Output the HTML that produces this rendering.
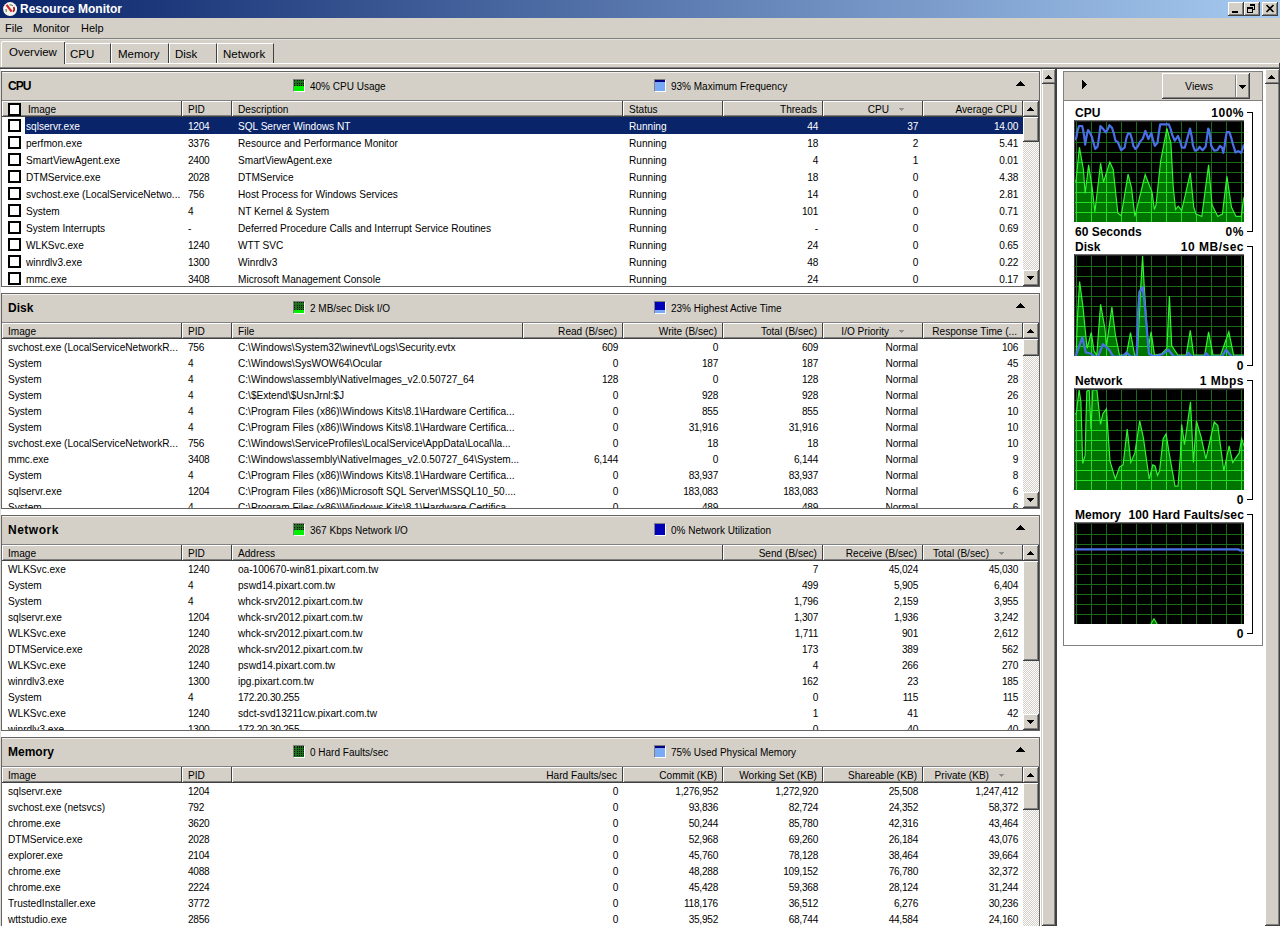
<!DOCTYPE html>
<html><head><meta charset="utf-8"><title>Resource Monitor</title>
<style>
html,body{margin:0;padding:0;}
body{width:1280px;height:926px;position:relative;overflow:hidden;background:#d4d0c8;font-family:"Liberation Sans",sans-serif;font-size:11px;color:#000;}
body div{position:absolute;box-sizing:border-box;}
.t{white-space:nowrap;font-size:10.1px;}
.n{letter-spacing:-0.25px;}
</style></head><body>
<div style="left:0px;top:0px;width:1280px;height:18px;background:linear-gradient(to right,#0a246a,#a6caf0);"></div>
<svg style="position:absolute;left:0px;top:0px" width="20" height="18" viewBox="0 0 20 18"><circle cx="10.1" cy="9.1" r="7" fill="#f6f4f0"/><path d="M6 9 L6.4 11.8" stroke="#608060" stroke-width="1.2" fill="none"/><path d="M9.5 4.6 L13 5.6" stroke="#709070" stroke-width="1.1" fill="none"/><path d="M13.6 7 Q15.2 9.5 13 11.8" stroke="#a01818" stroke-width="1.6" fill="none"/><path d="M6.6 4.8 L11.6 11.6" stroke="#d82020" stroke-width="2.2" fill="none"/></svg>
<div class="t" style="left:20px;top:2px;height:14px;line-height:14px;color:#fff;font-weight:bold;font-size:12px;">Resource Monitor</div>
<div style="left:1228px;top:2px;width:16px;height:14px;background:#d4d0c8;box-shadow:inset -1px -1px 0 #404040,inset 1px 1px 0 #fff,inset -2px -2px 0 #808080;"></div>
<div style="left:1244px;top:2px;width:16px;height:14px;background:#d4d0c8;box-shadow:inset -1px -1px 0 #404040,inset 1px 1px 0 #fff,inset -2px -2px 0 #808080;"></div>
<div style="left:1262px;top:2px;width:16px;height:14px;background:#d4d0c8;box-shadow:inset -1px -1px 0 #404040,inset 1px 1px 0 #fff,inset -2px -2px 0 #808080;"></div>
<div style="left:1232px;top:11px;width:6px;height:2px;background:#000;"></div>
<svg style="position:absolute;left:1246px;top:3px" width="10" height="10" viewBox="0 0 10 10" shape-rendering="crispEdges"><path d="M3.5 1.5 H8.5 V6.5 H7 M3.5 2.5 H8.5" stroke="#000" fill="none"/><path d="M1.5 4.5 H6.5 V9.5 H1.5 Z M1.5 5.5 H6.5" stroke="#000" fill="none"/></svg>
<svg style="position:absolute;left:1265px;top:4px" width="10" height="9" viewBox="0 0 10 9"><path d="M1.5 1 L8.5 8 M8.5 1 L1.5 8" stroke="#000" stroke-width="1.6" fill="none"/></svg>
<div style="left:0px;top:18px;width:1280px;height:20px;background:#d4d0c8;"></div>
<div style="left:0px;top:38px;width:1280px;height:1px;background:#808080;"></div>
<div style="left:0px;top:39px;width:1280px;height:1px;background:#e4e2dc;"></div>
<div class="t" style="left:5px;top:21px;height:14px;line-height:14px;font-size:11px;">File</div>
<div class="t" style="left:33px;top:21px;height:14px;line-height:14px;font-size:11px;">Monitor</div>
<div class="t" style="left:81px;top:21px;height:14px;line-height:14px;font-size:11px;">Help</div>
<div style="left:0px;top:40px;width:1280px;height:27px;background:#d4d0c8;"></div>
<div style="left:65px;top:63px;width:1215px;height:1px;background:#fff;"></div>
<div style="left:1px;top:41px;width:64px;height:27px;background:#d4d0c8;border-left:1px solid #fff;border-top:1px solid #fff;box-sizing:border-box;border-top-left-radius:2px;"></div>
<div style="left:64px;top:42px;width:1px;height:22px;background:#404040;"></div>
<div class="t" style="left:9px;top:44px;height:16px;line-height:16px;font-size:11.5px;">Overview</div>
<div style="left:65px;top:43px;width:46px;height:20px;background:#d4d0c8;border-left:1px solid #fff;border-top:1px solid #fff;border-right:1px solid #404040;box-sizing:border-box;"></div>
<div class="t" style="left:70px;top:46px;height:16px;line-height:16px;font-size:11.5px;">CPU</div>
<div style="left:111px;top:43px;width:58px;height:20px;background:#d4d0c8;border-left:1px solid #fff;border-top:1px solid #fff;border-right:1px solid #404040;box-sizing:border-box;"></div>
<div class="t" style="left:118px;top:46px;height:16px;line-height:16px;font-size:11.5px;">Memory</div>
<div style="left:169px;top:43px;width:48px;height:20px;background:#d4d0c8;border-left:1px solid #fff;border-top:1px solid #fff;border-right:1px solid #404040;box-sizing:border-box;"></div>
<div class="t" style="left:175px;top:46px;height:16px;line-height:16px;font-size:11.5px;">Disk</div>
<div style="left:217px;top:43px;width:57px;height:20px;background:#d4d0c8;border-left:1px solid #fff;border-top:1px solid #fff;border-right:1px solid #404040;box-sizing:border-box;"></div>
<div class="t" style="left:223px;top:46px;height:16px;line-height:16px;font-size:11.5px;">Network</div>
<div style="left:0px;top:67px;width:1280px;height:1px;background:#808080;"></div>
<div style="left:0px;top:68px;width:1280px;height:1px;background:#404040;"></div>
<div style="left:0px;top:69px;width:1041px;height:857px;background:#fff;"></div>
<div style="left:0px;top:69px;width:1px;height:857px;background:#e0ddd6;"></div>
<div style="left:1px;top:71px;width:1039px;height:216px;border:1px solid #646464;box-sizing:border-box;background:#d4d0c8;"></div>
<div style="left:2px;top:72px;width:1037px;height:1px;background:#f4f2ee;"></div>
<div class="t" style="left:8px;top:78px;height:16px;line-height:16px;font-weight:bold;font-size:12px;letter-spacing:-0.9px;">CPU</div>
<div style="left:293px;top:79px;width:12px;height:13px;border-top:1px solid #808080;border-left:1px solid #808080;border-bottom:1px solid #fff;border-right:1px solid #fff;overflow:hidden;">
<svg style="position:absolute;left:0;top:0" width="10" height="11" shape-rendering="crispEdges"><rect x="0" y="0" width="10" height="6" fill="#1f6f1f"/><rect x="0" y="0" width="1" height="1" fill="#001800"/><rect x="0" y="3" width="1" height="1" fill="#001800"/><rect x="0" y="5" width="1" height="1" fill="#001800"/><rect x="3" y="0" width="1" height="1" fill="#001800"/><rect x="3" y="3" width="1" height="1" fill="#001800"/><rect x="3" y="5" width="1" height="1" fill="#001800"/><rect x="5" y="0" width="1" height="1" fill="#001800"/><rect x="5" y="3" width="1" height="1" fill="#001800"/><rect x="5" y="5" width="1" height="1" fill="#001800"/><rect x="7" y="0" width="1" height="1" fill="#001800"/><rect x="7" y="3" width="1" height="1" fill="#001800"/><rect x="7" y="5" width="1" height="1" fill="#001800"/><rect x="9" y="0" width="1" height="1" fill="#001800"/><rect x="9" y="3" width="1" height="1" fill="#001800"/><rect x="9" y="5" width="1" height="1" fill="#001800"/><rect x="0" y="6" width="10" height="5" fill="#00f000"/></svg>
</div>
<div class="t" style="left:310px;top:79px;height:16px;line-height:16px;font-size:10px;">40% CPU Usage</div>
<div style="left:654px;top:79px;width:12px;height:13px;border-top:1px solid #808080;border-left:1px solid #808080;border-bottom:1px solid #fff;border-right:1px solid #fff;overflow:hidden;">
<div style="left:0;top:0;width:10px;height:2px;background:#000080;"></div>
<div style="left:0;top:2px;width:10px;height:9px;background:#78aaf8;"></div>
</div>
<div class="t" style="left:671px;top:79px;height:16px;line-height:16px;font-size:10px;">93% Maximum Frequency</div>
<svg style="position:absolute;left:1016px;top:81px" width="9" height="5" shape-rendering="crispEdges" fill="#000"><rect x="4" y="0" width="1" height="1"/><rect x="3" y="1" width="3" height="1"/><rect x="2" y="2" width="5" height="1"/><rect x="1" y="3" width="7" height="1"/><rect x="0" y="4" width="9" height="1"/></svg>
<div style="left:2px;top:100px;width:1037px;height:1px;background:#808080;"></div>
<div style="left:2px;top:101px;width:1037px;height:185px;background:#fff;overflow:hidden;"></div>
<div style="left:2px;top:101px;width:1021px;height:16px;background:#d4d0c8;"></div>
<div style="left:2px;top:101px;width:1021px;height:1px;background:#fff;"></div>
<div style="left:2px;top:115px;width:1021px;height:1px;background:#808080;"></div>
<div style="left:2px;top:116px;width:1021px;height:1px;background:#404040;"></div>
<div style="left:2px;top:101px;width:1px;height:15px;background:#fff;"></div>
<div style="left:181px;top:101px;width:1px;height:15px;background:#404040;"></div>
<div style="left:182px;top:101px;width:1px;height:15px;background:#fff;"></div>
<div class="t" style="left:28px;top:103px;height:14px;line-height:14px;">Image</div>
<div style="left:231px;top:101px;width:1px;height:15px;background:#404040;"></div>
<div style="left:232px;top:101px;width:1px;height:15px;background:#fff;"></div>
<div class="t" style="left:188px;top:103px;height:14px;line-height:14px;">PID</div>
<div style="left:622px;top:101px;width:1px;height:15px;background:#404040;"></div>
<div style="left:623px;top:101px;width:1px;height:15px;background:#fff;"></div>
<div class="t" style="left:238px;top:103px;height:14px;line-height:14px;">Description</div>
<div style="left:722px;top:101px;width:1px;height:15px;background:#404040;"></div>
<div style="left:723px;top:101px;width:1px;height:15px;background:#fff;"></div>
<div class="t" style="left:629px;top:103px;height:14px;line-height:14px;">Status</div>
<div style="left:822px;top:101px;width:1px;height:15px;background:#404040;"></div>
<div style="left:823px;top:101px;width:1px;height:15px;background:#fff;"></div>
<div class="t" style="left:723px;top:103px;width:94px;text-align:right;height:14px;line-height:14px;overflow:hidden;white-space:nowrap;">Threads</div>
<div style="left:922px;top:101px;width:1px;height:15px;background:#404040;"></div>
<div style="left:923px;top:101px;width:1px;height:15px;background:#fff;"></div>
<div class="t" style="left:823px;top:103px;width:66px;text-align:right;height:14px;line-height:14px;overflow:hidden;white-space:nowrap;">CPU</div>
<svg style="position:absolute;left:899px;top:108px" width="5" height="3" shape-rendering="crispEdges" fill="#909090"><rect x="0" y="0" width="5" height="1"/><rect x="1" y="1" width="3" height="1"/><rect x="2" y="2" width="1" height="1"/></svg>
<div style="left:1022px;top:101px;width:1px;height:15px;background:#404040;"></div>
<div style="left:1023px;top:101px;width:1px;height:15px;background:#fff;"></div>
<div class="t" style="left:923px;top:103px;width:94px;text-align:right;height:14px;line-height:14px;overflow:hidden;white-space:nowrap;">Average CPU</div>
<div style="left:8px;top:103px;width:13px;height:13px;border:2px solid #000;box-sizing:border-box;background:#fff;"></div>
<div style="left:2px;top:117px;width:1021px;height:169px;overflow:hidden;">
<div style="left:23px;top:0px;width:998px;height:17px;background:#0a246a;"></div>
<div style="left:6px;top:2px;width:13px;height:13px;border:2px solid #000;box-sizing:border-box;background:#fff;"></div>
<div class="t" style="left:24px;top:1px;height:17px;line-height:17px;color:#fff;">sqlservr.exe</div>
<div class="t n" style="left:186px;top:1px;height:17px;line-height:17px;color:#fff;">1204</div>
<div class="t" style="left:236px;top:1px;height:17px;line-height:17px;color:#fff;">SQL Server Windows NT</div>
<div class="t" style="left:627px;top:1px;height:17px;line-height:17px;color:#fff;">Running</div>
<div class="t n" style="left:721px;top:1px;width:95px;text-align:right;height:17px;line-height:17px;color:#fff;">44</div>
<div class="t n" style="left:821px;top:1px;width:95px;text-align:right;height:17px;line-height:17px;color:#fff;">37</div>
<div class="t n" style="left:921px;top:1px;width:95px;text-align:right;height:17px;line-height:17px;color:#fff;">14.00</div>
<div style="left:6px;top:19px;width:13px;height:13px;border:2px solid #000;box-sizing:border-box;background:#fff;"></div>
<div class="t" style="left:24px;top:18px;height:17px;line-height:17px;color:#000;">perfmon.exe</div>
<div class="t n" style="left:186px;top:18px;height:17px;line-height:17px;color:#000;">3376</div>
<div class="t" style="left:236px;top:18px;height:17px;line-height:17px;color:#000;">Resource and Performance Monitor</div>
<div class="t" style="left:627px;top:18px;height:17px;line-height:17px;color:#000;">Running</div>
<div class="t n" style="left:721px;top:18px;width:95px;text-align:right;height:17px;line-height:17px;color:#000;">18</div>
<div class="t n" style="left:821px;top:18px;width:95px;text-align:right;height:17px;line-height:17px;color:#000;">2</div>
<div class="t n" style="left:921px;top:18px;width:95px;text-align:right;height:17px;line-height:17px;color:#000;">5.41</div>
<div style="left:6px;top:36px;width:13px;height:13px;border:2px solid #000;box-sizing:border-box;background:#fff;"></div>
<div class="t" style="left:24px;top:35px;height:17px;line-height:17px;color:#000;">SmartViewAgent.exe</div>
<div class="t n" style="left:186px;top:35px;height:17px;line-height:17px;color:#000;">2400</div>
<div class="t" style="left:236px;top:35px;height:17px;line-height:17px;color:#000;">SmartViewAgent.exe</div>
<div class="t" style="left:627px;top:35px;height:17px;line-height:17px;color:#000;">Running</div>
<div class="t n" style="left:721px;top:35px;width:95px;text-align:right;height:17px;line-height:17px;color:#000;">4</div>
<div class="t n" style="left:821px;top:35px;width:95px;text-align:right;height:17px;line-height:17px;color:#000;">1</div>
<div class="t n" style="left:921px;top:35px;width:95px;text-align:right;height:17px;line-height:17px;color:#000;">0.01</div>
<div style="left:6px;top:53px;width:13px;height:13px;border:2px solid #000;box-sizing:border-box;background:#fff;"></div>
<div class="t" style="left:24px;top:52px;height:17px;line-height:17px;color:#000;">DTMService.exe</div>
<div class="t n" style="left:186px;top:52px;height:17px;line-height:17px;color:#000;">2028</div>
<div class="t" style="left:236px;top:52px;height:17px;line-height:17px;color:#000;">DTMService</div>
<div class="t" style="left:627px;top:52px;height:17px;line-height:17px;color:#000;">Running</div>
<div class="t n" style="left:721px;top:52px;width:95px;text-align:right;height:17px;line-height:17px;color:#000;">18</div>
<div class="t n" style="left:821px;top:52px;width:95px;text-align:right;height:17px;line-height:17px;color:#000;">0</div>
<div class="t n" style="left:921px;top:52px;width:95px;text-align:right;height:17px;line-height:17px;color:#000;">4.38</div>
<div style="left:6px;top:70px;width:13px;height:13px;border:2px solid #000;box-sizing:border-box;background:#fff;"></div>
<div class="t" style="left:24px;top:69px;height:17px;line-height:17px;color:#000;">svchost.exe (LocalServiceNetwo...</div>
<div class="t n" style="left:186px;top:69px;height:17px;line-height:17px;color:#000;">756</div>
<div class="t" style="left:236px;top:69px;height:17px;line-height:17px;color:#000;">Host Process for Windows Services</div>
<div class="t" style="left:627px;top:69px;height:17px;line-height:17px;color:#000;">Running</div>
<div class="t n" style="left:721px;top:69px;width:95px;text-align:right;height:17px;line-height:17px;color:#000;">14</div>
<div class="t n" style="left:821px;top:69px;width:95px;text-align:right;height:17px;line-height:17px;color:#000;">0</div>
<div class="t n" style="left:921px;top:69px;width:95px;text-align:right;height:17px;line-height:17px;color:#000;">2.81</div>
<div style="left:6px;top:87px;width:13px;height:13px;border:2px solid #000;box-sizing:border-box;background:#fff;"></div>
<div class="t" style="left:24px;top:86px;height:17px;line-height:17px;color:#000;">System</div>
<div class="t n" style="left:186px;top:86px;height:17px;line-height:17px;color:#000;">4</div>
<div class="t" style="left:236px;top:86px;height:17px;line-height:17px;color:#000;">NT Kernel &amp; System</div>
<div class="t" style="left:627px;top:86px;height:17px;line-height:17px;color:#000;">Running</div>
<div class="t n" style="left:721px;top:86px;width:95px;text-align:right;height:17px;line-height:17px;color:#000;">101</div>
<div class="t n" style="left:821px;top:86px;width:95px;text-align:right;height:17px;line-height:17px;color:#000;">0</div>
<div class="t n" style="left:921px;top:86px;width:95px;text-align:right;height:17px;line-height:17px;color:#000;">0.71</div>
<div style="left:6px;top:104px;width:13px;height:13px;border:2px solid #000;box-sizing:border-box;background:#fff;"></div>
<div class="t" style="left:24px;top:103px;height:17px;line-height:17px;color:#000;">System Interrupts</div>
<div class="t" style="left:186px;top:103px;height:17px;line-height:17px;color:#000;">-</div>
<div class="t" style="left:236px;top:103px;height:17px;line-height:17px;color:#000;">Deferred Procedure Calls and Interrupt Service Routines</div>
<div class="t" style="left:627px;top:103px;height:17px;line-height:17px;color:#000;">Running</div>
<div class="t" style="left:721px;top:103px;width:95px;text-align:right;height:17px;line-height:17px;color:#000;">-</div>
<div class="t n" style="left:821px;top:103px;width:95px;text-align:right;height:17px;line-height:17px;color:#000;">0</div>
<div class="t n" style="left:921px;top:103px;width:95px;text-align:right;height:17px;line-height:17px;color:#000;">0.69</div>
<div style="left:6px;top:121px;width:13px;height:13px;border:2px solid #000;box-sizing:border-box;background:#fff;"></div>
<div class="t" style="left:24px;top:120px;height:17px;line-height:17px;color:#000;">WLKSvc.exe</div>
<div class="t n" style="left:186px;top:120px;height:17px;line-height:17px;color:#000;">1240</div>
<div class="t" style="left:236px;top:120px;height:17px;line-height:17px;color:#000;">WTT SVC</div>
<div class="t" style="left:627px;top:120px;height:17px;line-height:17px;color:#000;">Running</div>
<div class="t n" style="left:721px;top:120px;width:95px;text-align:right;height:17px;line-height:17px;color:#000;">24</div>
<div class="t n" style="left:821px;top:120px;width:95px;text-align:right;height:17px;line-height:17px;color:#000;">0</div>
<div class="t n" style="left:921px;top:120px;width:95px;text-align:right;height:17px;line-height:17px;color:#000;">0.65</div>
<div style="left:6px;top:138px;width:13px;height:13px;border:2px solid #000;box-sizing:border-box;background:#fff;"></div>
<div class="t" style="left:24px;top:137px;height:17px;line-height:17px;color:#000;">winrdlv3.exe</div>
<div class="t n" style="left:186px;top:137px;height:17px;line-height:17px;color:#000;">1300</div>
<div class="t" style="left:236px;top:137px;height:17px;line-height:17px;color:#000;">Winrdlv3</div>
<div class="t" style="left:627px;top:137px;height:17px;line-height:17px;color:#000;">Running</div>
<div class="t n" style="left:721px;top:137px;width:95px;text-align:right;height:17px;line-height:17px;color:#000;">48</div>
<div class="t n" style="left:821px;top:137px;width:95px;text-align:right;height:17px;line-height:17px;color:#000;">0</div>
<div class="t n" style="left:921px;top:137px;width:95px;text-align:right;height:17px;line-height:17px;color:#000;">0.22</div>
<div style="left:6px;top:155px;width:13px;height:13px;border:2px solid #000;box-sizing:border-box;background:#fff;"></div>
<div class="t" style="left:24px;top:154px;height:17px;line-height:17px;color:#000;">mmc.exe</div>
<div class="t n" style="left:186px;top:154px;height:17px;line-height:17px;color:#000;">3408</div>
<div class="t" style="left:236px;top:154px;height:17px;line-height:17px;color:#000;">Microsoft Management Console</div>
<div class="t" style="left:627px;top:154px;height:17px;line-height:17px;color:#000;">Running</div>
<div class="t n" style="left:721px;top:154px;width:95px;text-align:right;height:17px;line-height:17px;color:#000;">24</div>
<div class="t n" style="left:821px;top:154px;width:95px;text-align:right;height:17px;line-height:17px;color:#000;">0</div>
<div class="t n" style="left:921px;top:154px;width:95px;text-align:right;height:17px;line-height:17px;color:#000;">0.17</div>
</div>
<div style="left:1023px;top:101px;width:16px;height:185px;background-color:#fff;background-image:linear-gradient(45deg,#d4d0c8 25%,transparent 25%,transparent 75%,#d4d0c8 75%),linear-gradient(45deg,#d4d0c8 25%,transparent 25%,transparent 75%,#d4d0c8 75%);background-size:2px 2px;background-position:0 0,1px 1px;"></div>
<div style="left:1023px;top:101px;width:16px;height:16px;background:#d4d0c8;box-shadow:inset -1px -1px 0 #404040,inset 1px 1px 0 #fff,inset -2px -2px 0 #808080;"></div>
<svg style="position:absolute;left:1027px;top:107px" width="7" height="4" shape-rendering="crispEdges" fill="#000"><rect x="3" y="0" width="1" height="1"/><rect x="2" y="1" width="3" height="1"/><rect x="1" y="2" width="5" height="1"/><rect x="0" y="3" width="7" height="1"/></svg>
<div style="left:1023px;top:270px;width:16px;height:16px;background:#d4d0c8;box-shadow:inset -1px -1px 0 #404040,inset 1px 1px 0 #fff,inset -2px -2px 0 #808080;"></div>
<svg style="position:absolute;left:1027px;top:276px" width="7" height="4" shape-rendering="crispEdges" fill="#000"><rect x="0" y="0" width="7" height="1"/><rect x="1" y="1" width="5" height="1"/><rect x="2" y="2" width="3" height="1"/><rect x="3" y="3" width="1" height="1"/></svg>
<div style="left:1023px;top:117px;width:16px;height:25px;background:#d4d0c8;box-shadow:inset -1px -1px 0 #404040,inset 1px 1px 0 #fff,inset -2px -2px 0 #808080;"></div>
<div style="left:1px;top:293px;width:1039px;height:216px;border:1px solid #646464;box-sizing:border-box;background:#d4d0c8;"></div>
<div style="left:2px;top:294px;width:1037px;height:1px;background:#f4f2ee;"></div>
<div class="t" style="left:8px;top:300px;height:16px;line-height:16px;font-weight:bold;font-size:12px;letter-spacing:0;">Disk</div>
<div style="left:293px;top:301px;width:12px;height:13px;border-top:1px solid #808080;border-left:1px solid #808080;border-bottom:1px solid #fff;border-right:1px solid #fff;overflow:hidden;">
<svg style="position:absolute;left:0;top:0" width="10" height="11" shape-rendering="crispEdges"><rect x="0" y="0" width="10" height="8" fill="#1f6f1f"/><rect x="0" y="0" width="1" height="1" fill="#001800"/><rect x="0" y="3" width="1" height="1" fill="#001800"/><rect x="0" y="5" width="1" height="1" fill="#001800"/><rect x="0" y="7" width="1" height="1" fill="#001800"/><rect x="3" y="0" width="1" height="1" fill="#001800"/><rect x="3" y="3" width="1" height="1" fill="#001800"/><rect x="3" y="5" width="1" height="1" fill="#001800"/><rect x="3" y="7" width="1" height="1" fill="#001800"/><rect x="5" y="0" width="1" height="1" fill="#001800"/><rect x="5" y="3" width="1" height="1" fill="#001800"/><rect x="5" y="5" width="1" height="1" fill="#001800"/><rect x="5" y="7" width="1" height="1" fill="#001800"/><rect x="7" y="0" width="1" height="1" fill="#001800"/><rect x="7" y="3" width="1" height="1" fill="#001800"/><rect x="7" y="5" width="1" height="1" fill="#001800"/><rect x="7" y="7" width="1" height="1" fill="#001800"/><rect x="9" y="0" width="1" height="1" fill="#001800"/><rect x="9" y="3" width="1" height="1" fill="#001800"/><rect x="9" y="5" width="1" height="1" fill="#001800"/><rect x="9" y="7" width="1" height="1" fill="#001800"/><rect x="0" y="8" width="10" height="3" fill="#00f000"/></svg>
</div>
<div class="t" style="left:310px;top:301px;height:16px;line-height:16px;font-size:10px;">2 MB/sec Disk I/O</div>
<div style="left:654px;top:301px;width:12px;height:13px;border-top:1px solid #808080;border-left:1px solid #808080;border-bottom:1px solid #fff;border-right:1px solid #fff;overflow:hidden;">
<div style="left:0;top:0;width:10px;height:8px;background:#0000b8;"></div>
<div style="left:0;top:8px;width:10px;height:3px;background:#78aaf8;"></div>
</div>
<div class="t" style="left:671px;top:301px;height:16px;line-height:16px;font-size:10px;">23% Highest Active Time</div>
<svg style="position:absolute;left:1016px;top:303px" width="9" height="5" shape-rendering="crispEdges" fill="#000"><rect x="4" y="0" width="1" height="1"/><rect x="3" y="1" width="3" height="1"/><rect x="2" y="2" width="5" height="1"/><rect x="1" y="3" width="7" height="1"/><rect x="0" y="4" width="9" height="1"/></svg>
<div style="left:2px;top:322px;width:1037px;height:1px;background:#808080;"></div>
<div style="left:2px;top:323px;width:1037px;height:185px;background:#fff;overflow:hidden;"></div>
<div style="left:2px;top:323px;width:1021px;height:16px;background:#d4d0c8;"></div>
<div style="left:2px;top:323px;width:1021px;height:1px;background:#fff;"></div>
<div style="left:2px;top:337px;width:1021px;height:1px;background:#808080;"></div>
<div style="left:2px;top:338px;width:1021px;height:1px;background:#404040;"></div>
<div style="left:2px;top:323px;width:1px;height:15px;background:#fff;"></div>
<div style="left:181px;top:323px;width:1px;height:15px;background:#404040;"></div>
<div style="left:182px;top:323px;width:1px;height:15px;background:#fff;"></div>
<div class="t" style="left:8px;top:325px;height:14px;line-height:14px;">Image</div>
<div style="left:231px;top:323px;width:1px;height:15px;background:#404040;"></div>
<div style="left:232px;top:323px;width:1px;height:15px;background:#fff;"></div>
<div class="t" style="left:188px;top:325px;height:14px;line-height:14px;">PID</div>
<div style="left:522px;top:323px;width:1px;height:15px;background:#404040;"></div>
<div style="left:523px;top:323px;width:1px;height:15px;background:#fff;"></div>
<div class="t" style="left:238px;top:325px;height:14px;line-height:14px;">File</div>
<div style="left:622px;top:323px;width:1px;height:15px;background:#404040;"></div>
<div style="left:623px;top:323px;width:1px;height:15px;background:#fff;"></div>
<div class="t" style="left:523px;top:325px;width:94px;text-align:right;height:14px;line-height:14px;overflow:hidden;white-space:nowrap;">Read (B/sec)</div>
<div style="left:722px;top:323px;width:1px;height:15px;background:#404040;"></div>
<div style="left:723px;top:323px;width:1px;height:15px;background:#fff;"></div>
<div class="t" style="left:623px;top:325px;width:94px;text-align:right;height:14px;line-height:14px;overflow:hidden;white-space:nowrap;">Write (B/sec)</div>
<div style="left:822px;top:323px;width:1px;height:15px;background:#404040;"></div>
<div style="left:823px;top:323px;width:1px;height:15px;background:#fff;"></div>
<div class="t" style="left:723px;top:325px;width:94px;text-align:right;height:14px;line-height:14px;overflow:hidden;white-space:nowrap;">Total (B/sec)</div>
<div style="left:922px;top:323px;width:1px;height:15px;background:#404040;"></div>
<div style="left:923px;top:323px;width:1px;height:15px;background:#fff;"></div>
<div class="t" style="left:823px;top:325px;width:66px;text-align:right;height:14px;line-height:14px;overflow:hidden;white-space:nowrap;">I/O Priority</div>
<svg style="position:absolute;left:899px;top:330px" width="5" height="3" shape-rendering="crispEdges" fill="#909090"><rect x="0" y="0" width="5" height="1"/><rect x="1" y="1" width="3" height="1"/><rect x="2" y="2" width="1" height="1"/></svg>
<div style="left:1022px;top:323px;width:1px;height:15px;background:#404040;"></div>
<div style="left:1023px;top:323px;width:1px;height:15px;background:#fff;"></div>
<div class="t" style="left:923px;top:325px;width:94px;text-align:right;height:14px;line-height:14px;overflow:hidden;white-space:nowrap;">Response Time (...</div>
<div style="left:2px;top:339px;width:1021px;height:169px;overflow:hidden;">
<div class="t" style="left:6px;top:1px;height:16px;line-height:16px;color:#000;">svchost.exe (LocalServiceNetworkR...</div>
<div class="t n" style="left:186px;top:1px;height:16px;line-height:16px;color:#000;">756</div>
<div class="t" style="left:236px;top:1px;height:16px;line-height:16px;color:#000;">C:\Windows\System32\winevt\Logs\Security.evtx</div>
<div class="t n" style="left:521px;top:1px;width:95px;text-align:right;height:16px;line-height:16px;color:#000;">609</div>
<div class="t n" style="left:621px;top:1px;width:95px;text-align:right;height:16px;line-height:16px;color:#000;">0</div>
<div class="t n" style="left:721px;top:1px;width:95px;text-align:right;height:16px;line-height:16px;color:#000;">609</div>
<div class="t" style="left:821px;top:1px;width:95px;text-align:right;height:16px;line-height:16px;color:#000;">Normal</div>
<div class="t n" style="left:921px;top:1px;width:95px;text-align:right;height:16px;line-height:16px;color:#000;">106</div>
<div class="t" style="left:6px;top:17px;height:16px;line-height:16px;color:#000;">System</div>
<div class="t n" style="left:186px;top:17px;height:16px;line-height:16px;color:#000;">4</div>
<div class="t" style="left:236px;top:17px;height:16px;line-height:16px;color:#000;">C:\Windows\SysWOW64\Ocular</div>
<div class="t n" style="left:521px;top:17px;width:95px;text-align:right;height:16px;line-height:16px;color:#000;">0</div>
<div class="t n" style="left:621px;top:17px;width:95px;text-align:right;height:16px;line-height:16px;color:#000;">187</div>
<div class="t n" style="left:721px;top:17px;width:95px;text-align:right;height:16px;line-height:16px;color:#000;">187</div>
<div class="t" style="left:821px;top:17px;width:95px;text-align:right;height:16px;line-height:16px;color:#000;">Normal</div>
<div class="t n" style="left:921px;top:17px;width:95px;text-align:right;height:16px;line-height:16px;color:#000;">45</div>
<div class="t" style="left:6px;top:33px;height:16px;line-height:16px;color:#000;">System</div>
<div class="t n" style="left:186px;top:33px;height:16px;line-height:16px;color:#000;">4</div>
<div class="t" style="left:236px;top:33px;height:16px;line-height:16px;color:#000;">C:\Windows\assembly\NativeImages_v2.0.50727_64</div>
<div class="t n" style="left:521px;top:33px;width:95px;text-align:right;height:16px;line-height:16px;color:#000;">128</div>
<div class="t n" style="left:621px;top:33px;width:95px;text-align:right;height:16px;line-height:16px;color:#000;">0</div>
<div class="t n" style="left:721px;top:33px;width:95px;text-align:right;height:16px;line-height:16px;color:#000;">128</div>
<div class="t" style="left:821px;top:33px;width:95px;text-align:right;height:16px;line-height:16px;color:#000;">Normal</div>
<div class="t n" style="left:921px;top:33px;width:95px;text-align:right;height:16px;line-height:16px;color:#000;">28</div>
<div class="t" style="left:6px;top:49px;height:16px;line-height:16px;color:#000;">System</div>
<div class="t n" style="left:186px;top:49px;height:16px;line-height:16px;color:#000;">4</div>
<div class="t" style="left:236px;top:49px;height:16px;line-height:16px;color:#000;">C:\$Extend\$UsnJrnl:$J</div>
<div class="t n" style="left:521px;top:49px;width:95px;text-align:right;height:16px;line-height:16px;color:#000;">0</div>
<div class="t n" style="left:621px;top:49px;width:95px;text-align:right;height:16px;line-height:16px;color:#000;">928</div>
<div class="t n" style="left:721px;top:49px;width:95px;text-align:right;height:16px;line-height:16px;color:#000;">928</div>
<div class="t" style="left:821px;top:49px;width:95px;text-align:right;height:16px;line-height:16px;color:#000;">Normal</div>
<div class="t n" style="left:921px;top:49px;width:95px;text-align:right;height:16px;line-height:16px;color:#000;">26</div>
<div class="t" style="left:6px;top:65px;height:16px;line-height:16px;color:#000;">System</div>
<div class="t n" style="left:186px;top:65px;height:16px;line-height:16px;color:#000;">4</div>
<div class="t" style="left:236px;top:65px;height:16px;line-height:16px;color:#000;">C:\Program Files (x86)\Windows Kits\8.1\Hardware Certifica...</div>
<div class="t n" style="left:521px;top:65px;width:95px;text-align:right;height:16px;line-height:16px;color:#000;">0</div>
<div class="t n" style="left:621px;top:65px;width:95px;text-align:right;height:16px;line-height:16px;color:#000;">855</div>
<div class="t n" style="left:721px;top:65px;width:95px;text-align:right;height:16px;line-height:16px;color:#000;">855</div>
<div class="t" style="left:821px;top:65px;width:95px;text-align:right;height:16px;line-height:16px;color:#000;">Normal</div>
<div class="t n" style="left:921px;top:65px;width:95px;text-align:right;height:16px;line-height:16px;color:#000;">10</div>
<div class="t" style="left:6px;top:81px;height:16px;line-height:16px;color:#000;">System</div>
<div class="t n" style="left:186px;top:81px;height:16px;line-height:16px;color:#000;">4</div>
<div class="t" style="left:236px;top:81px;height:16px;line-height:16px;color:#000;">C:\Program Files (x86)\Windows Kits\8.1\Hardware Certifica...</div>
<div class="t n" style="left:521px;top:81px;width:95px;text-align:right;height:16px;line-height:16px;color:#000;">0</div>
<div class="t n" style="left:621px;top:81px;width:95px;text-align:right;height:16px;line-height:16px;color:#000;">31,916</div>
<div class="t n" style="left:721px;top:81px;width:95px;text-align:right;height:16px;line-height:16px;color:#000;">31,916</div>
<div class="t" style="left:821px;top:81px;width:95px;text-align:right;height:16px;line-height:16px;color:#000;">Normal</div>
<div class="t n" style="left:921px;top:81px;width:95px;text-align:right;height:16px;line-height:16px;color:#000;">10</div>
<div class="t" style="left:6px;top:97px;height:16px;line-height:16px;color:#000;">svchost.exe (LocalServiceNetworkR...</div>
<div class="t n" style="left:186px;top:97px;height:16px;line-height:16px;color:#000;">756</div>
<div class="t" style="left:236px;top:97px;height:16px;line-height:16px;color:#000;">C:\Windows\ServiceProfiles\LocalService\AppData\Local\la...</div>
<div class="t n" style="left:521px;top:97px;width:95px;text-align:right;height:16px;line-height:16px;color:#000;">0</div>
<div class="t n" style="left:621px;top:97px;width:95px;text-align:right;height:16px;line-height:16px;color:#000;">18</div>
<div class="t n" style="left:721px;top:97px;width:95px;text-align:right;height:16px;line-height:16px;color:#000;">18</div>
<div class="t" style="left:821px;top:97px;width:95px;text-align:right;height:16px;line-height:16px;color:#000;">Normal</div>
<div class="t n" style="left:921px;top:97px;width:95px;text-align:right;height:16px;line-height:16px;color:#000;">10</div>
<div class="t" style="left:6px;top:113px;height:16px;line-height:16px;color:#000;">mmc.exe</div>
<div class="t n" style="left:186px;top:113px;height:16px;line-height:16px;color:#000;">3408</div>
<div class="t" style="left:236px;top:113px;height:16px;line-height:16px;color:#000;">C:\Windows\assembly\NativeImages_v2.0.50727_64\System...</div>
<div class="t n" style="left:521px;top:113px;width:95px;text-align:right;height:16px;line-height:16px;color:#000;">6,144</div>
<div class="t n" style="left:621px;top:113px;width:95px;text-align:right;height:16px;line-height:16px;color:#000;">0</div>
<div class="t n" style="left:721px;top:113px;width:95px;text-align:right;height:16px;line-height:16px;color:#000;">6,144</div>
<div class="t" style="left:821px;top:113px;width:95px;text-align:right;height:16px;line-height:16px;color:#000;">Normal</div>
<div class="t n" style="left:921px;top:113px;width:95px;text-align:right;height:16px;line-height:16px;color:#000;">9</div>
<div class="t" style="left:6px;top:129px;height:16px;line-height:16px;color:#000;">System</div>
<div class="t n" style="left:186px;top:129px;height:16px;line-height:16px;color:#000;">4</div>
<div class="t" style="left:236px;top:129px;height:16px;line-height:16px;color:#000;">C:\Program Files (x86)\Windows Kits\8.1\Hardware Certifica...</div>
<div class="t n" style="left:521px;top:129px;width:95px;text-align:right;height:16px;line-height:16px;color:#000;">0</div>
<div class="t n" style="left:621px;top:129px;width:95px;text-align:right;height:16px;line-height:16px;color:#000;">83,937</div>
<div class="t n" style="left:721px;top:129px;width:95px;text-align:right;height:16px;line-height:16px;color:#000;">83,937</div>
<div class="t" style="left:821px;top:129px;width:95px;text-align:right;height:16px;line-height:16px;color:#000;">Normal</div>
<div class="t n" style="left:921px;top:129px;width:95px;text-align:right;height:16px;line-height:16px;color:#000;">8</div>
<div class="t" style="left:6px;top:145px;height:16px;line-height:16px;color:#000;">sqlservr.exe</div>
<div class="t n" style="left:186px;top:145px;height:16px;line-height:16px;color:#000;">1204</div>
<div class="t" style="left:236px;top:145px;height:16px;line-height:16px;color:#000;">C:\Program Files (x86)\Microsoft SQL Server\MSSQL10_50....</div>
<div class="t n" style="left:521px;top:145px;width:95px;text-align:right;height:16px;line-height:16px;color:#000;">0</div>
<div class="t n" style="left:621px;top:145px;width:95px;text-align:right;height:16px;line-height:16px;color:#000;">183,083</div>
<div class="t n" style="left:721px;top:145px;width:95px;text-align:right;height:16px;line-height:16px;color:#000;">183,083</div>
<div class="t" style="left:821px;top:145px;width:95px;text-align:right;height:16px;line-height:16px;color:#000;">Normal</div>
<div class="t n" style="left:921px;top:145px;width:95px;text-align:right;height:16px;line-height:16px;color:#000;">6</div>
<div class="t" style="left:6px;top:161px;height:16px;line-height:16px;color:#000;">System</div>
<div class="t n" style="left:186px;top:161px;height:16px;line-height:16px;color:#000;">4</div>
<div class="t" style="left:236px;top:161px;height:16px;line-height:16px;color:#000;">C:\Program Files (x86)\Windows Kits\8.1\Hardware Certifica...</div>
<div class="t n" style="left:521px;top:161px;width:95px;text-align:right;height:16px;line-height:16px;color:#000;">0</div>
<div class="t n" style="left:621px;top:161px;width:95px;text-align:right;height:16px;line-height:16px;color:#000;">489</div>
<div class="t n" style="left:721px;top:161px;width:95px;text-align:right;height:16px;line-height:16px;color:#000;">489</div>
<div class="t" style="left:821px;top:161px;width:95px;text-align:right;height:16px;line-height:16px;color:#000;">Normal</div>
<div class="t n" style="left:921px;top:161px;width:95px;text-align:right;height:16px;line-height:16px;color:#000;">6</div>
</div>
<div style="left:1023px;top:323px;width:16px;height:185px;background-color:#fff;background-image:linear-gradient(45deg,#d4d0c8 25%,transparent 25%,transparent 75%,#d4d0c8 75%),linear-gradient(45deg,#d4d0c8 25%,transparent 25%,transparent 75%,#d4d0c8 75%);background-size:2px 2px;background-position:0 0,1px 1px;"></div>
<div style="left:1023px;top:323px;width:16px;height:16px;background:#d4d0c8;box-shadow:inset -1px -1px 0 #404040,inset 1px 1px 0 #fff,inset -2px -2px 0 #808080;"></div>
<svg style="position:absolute;left:1027px;top:329px" width="7" height="4" shape-rendering="crispEdges" fill="#000"><rect x="3" y="0" width="1" height="1"/><rect x="2" y="1" width="3" height="1"/><rect x="1" y="2" width="5" height="1"/><rect x="0" y="3" width="7" height="1"/></svg>
<div style="left:1023px;top:492px;width:16px;height:16px;background:#d4d0c8;box-shadow:inset -1px -1px 0 #404040,inset 1px 1px 0 #fff,inset -2px -2px 0 #808080;"></div>
<svg style="position:absolute;left:1027px;top:498px" width="7" height="4" shape-rendering="crispEdges" fill="#000"><rect x="0" y="0" width="7" height="1"/><rect x="1" y="1" width="5" height="1"/><rect x="2" y="2" width="3" height="1"/><rect x="3" y="3" width="1" height="1"/></svg>
<div style="left:1023px;top:339px;width:16px;height:17px;background:#d4d0c8;box-shadow:inset -1px -1px 0 #404040,inset 1px 1px 0 #fff,inset -2px -2px 0 #808080;"></div>
<div style="left:1px;top:515px;width:1039px;height:216px;border:1px solid #646464;box-sizing:border-box;background:#d4d0c8;"></div>
<div style="left:2px;top:516px;width:1037px;height:1px;background:#f4f2ee;"></div>
<div class="t" style="left:8px;top:522px;height:16px;line-height:16px;font-weight:bold;font-size:12px;letter-spacing:0.5px;">Network</div>
<div style="left:293px;top:523px;width:12px;height:13px;border-top:1px solid #808080;border-left:1px solid #808080;border-bottom:1px solid #fff;border-right:1px solid #fff;overflow:hidden;">
<svg style="position:absolute;left:0;top:0" width="10" height="11" shape-rendering="crispEdges"><rect x="0" y="0" width="10" height="6" fill="#1f6f1f"/><rect x="0" y="0" width="1" height="1" fill="#001800"/><rect x="0" y="3" width="1" height="1" fill="#001800"/><rect x="0" y="5" width="1" height="1" fill="#001800"/><rect x="3" y="0" width="1" height="1" fill="#001800"/><rect x="3" y="3" width="1" height="1" fill="#001800"/><rect x="3" y="5" width="1" height="1" fill="#001800"/><rect x="5" y="0" width="1" height="1" fill="#001800"/><rect x="5" y="3" width="1" height="1" fill="#001800"/><rect x="5" y="5" width="1" height="1" fill="#001800"/><rect x="7" y="0" width="1" height="1" fill="#001800"/><rect x="7" y="3" width="1" height="1" fill="#001800"/><rect x="7" y="5" width="1" height="1" fill="#001800"/><rect x="9" y="0" width="1" height="1" fill="#001800"/><rect x="9" y="3" width="1" height="1" fill="#001800"/><rect x="9" y="5" width="1" height="1" fill="#001800"/><rect x="0" y="6" width="10" height="5" fill="#00f000"/></svg>
</div>
<div class="t" style="left:310px;top:523px;height:16px;line-height:16px;font-size:10px;">367 Kbps Network I/O</div>
<div style="left:654px;top:523px;width:12px;height:13px;border-top:1px solid #808080;border-left:1px solid #808080;border-bottom:1px solid #fff;border-right:1px solid #fff;overflow:hidden;">
<div style="left:0;top:0;width:10px;height:11px;background:#0000b8;"></div>
</div>
<div class="t" style="left:671px;top:523px;height:16px;line-height:16px;font-size:10px;">0% Network Utilization</div>
<svg style="position:absolute;left:1016px;top:525px" width="9" height="5" shape-rendering="crispEdges" fill="#000"><rect x="4" y="0" width="1" height="1"/><rect x="3" y="1" width="3" height="1"/><rect x="2" y="2" width="5" height="1"/><rect x="1" y="3" width="7" height="1"/><rect x="0" y="4" width="9" height="1"/></svg>
<div style="left:2px;top:544px;width:1037px;height:1px;background:#808080;"></div>
<div style="left:2px;top:545px;width:1037px;height:185px;background:#fff;overflow:hidden;"></div>
<div style="left:2px;top:545px;width:1021px;height:16px;background:#d4d0c8;"></div>
<div style="left:2px;top:545px;width:1021px;height:1px;background:#fff;"></div>
<div style="left:2px;top:559px;width:1021px;height:1px;background:#808080;"></div>
<div style="left:2px;top:560px;width:1021px;height:1px;background:#404040;"></div>
<div style="left:2px;top:545px;width:1px;height:15px;background:#fff;"></div>
<div style="left:181px;top:545px;width:1px;height:15px;background:#404040;"></div>
<div style="left:182px;top:545px;width:1px;height:15px;background:#fff;"></div>
<div class="t" style="left:8px;top:547px;height:14px;line-height:14px;">Image</div>
<div style="left:231px;top:545px;width:1px;height:15px;background:#404040;"></div>
<div style="left:232px;top:545px;width:1px;height:15px;background:#fff;"></div>
<div class="t" style="left:188px;top:547px;height:14px;line-height:14px;">PID</div>
<div style="left:722px;top:545px;width:1px;height:15px;background:#404040;"></div>
<div style="left:723px;top:545px;width:1px;height:15px;background:#fff;"></div>
<div class="t" style="left:238px;top:547px;height:14px;line-height:14px;">Address</div>
<div style="left:822px;top:545px;width:1px;height:15px;background:#404040;"></div>
<div style="left:823px;top:545px;width:1px;height:15px;background:#fff;"></div>
<div class="t" style="left:723px;top:547px;width:94px;text-align:right;height:14px;line-height:14px;overflow:hidden;white-space:nowrap;">Send (B/sec)</div>
<div style="left:922px;top:545px;width:1px;height:15px;background:#404040;"></div>
<div style="left:923px;top:545px;width:1px;height:15px;background:#fff;"></div>
<div class="t" style="left:823px;top:547px;width:94px;text-align:right;height:14px;line-height:14px;overflow:hidden;white-space:nowrap;">Receive (B/sec)</div>
<div style="left:1022px;top:545px;width:1px;height:15px;background:#404040;"></div>
<div style="left:1023px;top:545px;width:1px;height:15px;background:#fff;"></div>
<div class="t" style="left:923px;top:547px;width:66px;text-align:right;height:14px;line-height:14px;overflow:hidden;white-space:nowrap;">Total (B/sec)</div>
<svg style="position:absolute;left:999px;top:552px" width="5" height="3" shape-rendering="crispEdges" fill="#909090"><rect x="0" y="0" width="5" height="1"/><rect x="1" y="1" width="3" height="1"/><rect x="2" y="2" width="1" height="1"/></svg>
<div style="left:2px;top:561px;width:1021px;height:169px;overflow:hidden;">
<div class="t" style="left:6px;top:1px;height:16px;line-height:16px;color:#000;">WLKSvc.exe</div>
<div class="t n" style="left:186px;top:1px;height:16px;line-height:16px;color:#000;">1240</div>
<div class="t" style="left:236px;top:1px;height:16px;line-height:16px;color:#000;">oa-100670-win81.pixart.com.tw</div>
<div class="t n" style="left:721px;top:1px;width:95px;text-align:right;height:16px;line-height:16px;color:#000;">7</div>
<div class="t n" style="left:821px;top:1px;width:95px;text-align:right;height:16px;line-height:16px;color:#000;">45,024</div>
<div class="t n" style="left:921px;top:1px;width:95px;text-align:right;height:16px;line-height:16px;color:#000;">45,030</div>
<div class="t" style="left:6px;top:17px;height:16px;line-height:16px;color:#000;">System</div>
<div class="t n" style="left:186px;top:17px;height:16px;line-height:16px;color:#000;">4</div>
<div class="t" style="left:236px;top:17px;height:16px;line-height:16px;color:#000;">pswd14.pixart.com.tw</div>
<div class="t n" style="left:721px;top:17px;width:95px;text-align:right;height:16px;line-height:16px;color:#000;">499</div>
<div class="t n" style="left:821px;top:17px;width:95px;text-align:right;height:16px;line-height:16px;color:#000;">5,905</div>
<div class="t n" style="left:921px;top:17px;width:95px;text-align:right;height:16px;line-height:16px;color:#000;">6,404</div>
<div class="t" style="left:6px;top:33px;height:16px;line-height:16px;color:#000;">System</div>
<div class="t n" style="left:186px;top:33px;height:16px;line-height:16px;color:#000;">4</div>
<div class="t" style="left:236px;top:33px;height:16px;line-height:16px;color:#000;">whck-srv2012.pixart.com.tw</div>
<div class="t n" style="left:721px;top:33px;width:95px;text-align:right;height:16px;line-height:16px;color:#000;">1,796</div>
<div class="t n" style="left:821px;top:33px;width:95px;text-align:right;height:16px;line-height:16px;color:#000;">2,159</div>
<div class="t n" style="left:921px;top:33px;width:95px;text-align:right;height:16px;line-height:16px;color:#000;">3,955</div>
<div class="t" style="left:6px;top:49px;height:16px;line-height:16px;color:#000;">sqlservr.exe</div>
<div class="t n" style="left:186px;top:49px;height:16px;line-height:16px;color:#000;">1204</div>
<div class="t" style="left:236px;top:49px;height:16px;line-height:16px;color:#000;">whck-srv2012.pixart.com.tw</div>
<div class="t n" style="left:721px;top:49px;width:95px;text-align:right;height:16px;line-height:16px;color:#000;">1,307</div>
<div class="t n" style="left:821px;top:49px;width:95px;text-align:right;height:16px;line-height:16px;color:#000;">1,936</div>
<div class="t n" style="left:921px;top:49px;width:95px;text-align:right;height:16px;line-height:16px;color:#000;">3,242</div>
<div class="t" style="left:6px;top:65px;height:16px;line-height:16px;color:#000;">WLKSvc.exe</div>
<div class="t n" style="left:186px;top:65px;height:16px;line-height:16px;color:#000;">1240</div>
<div class="t" style="left:236px;top:65px;height:16px;line-height:16px;color:#000;">whck-srv2012.pixart.com.tw</div>
<div class="t n" style="left:721px;top:65px;width:95px;text-align:right;height:16px;line-height:16px;color:#000;">1,711</div>
<div class="t n" style="left:821px;top:65px;width:95px;text-align:right;height:16px;line-height:16px;color:#000;">901</div>
<div class="t n" style="left:921px;top:65px;width:95px;text-align:right;height:16px;line-height:16px;color:#000;">2,612</div>
<div class="t" style="left:6px;top:81px;height:16px;line-height:16px;color:#000;">DTMService.exe</div>
<div class="t n" style="left:186px;top:81px;height:16px;line-height:16px;color:#000;">2028</div>
<div class="t" style="left:236px;top:81px;height:16px;line-height:16px;color:#000;">whck-srv2012.pixart.com.tw</div>
<div class="t n" style="left:721px;top:81px;width:95px;text-align:right;height:16px;line-height:16px;color:#000;">173</div>
<div class="t n" style="left:821px;top:81px;width:95px;text-align:right;height:16px;line-height:16px;color:#000;">389</div>
<div class="t n" style="left:921px;top:81px;width:95px;text-align:right;height:16px;line-height:16px;color:#000;">562</div>
<div class="t" style="left:6px;top:97px;height:16px;line-height:16px;color:#000;">WLKSvc.exe</div>
<div class="t n" style="left:186px;top:97px;height:16px;line-height:16px;color:#000;">1240</div>
<div class="t" style="left:236px;top:97px;height:16px;line-height:16px;color:#000;">pswd14.pixart.com.tw</div>
<div class="t n" style="left:721px;top:97px;width:95px;text-align:right;height:16px;line-height:16px;color:#000;">4</div>
<div class="t n" style="left:821px;top:97px;width:95px;text-align:right;height:16px;line-height:16px;color:#000;">266</div>
<div class="t n" style="left:921px;top:97px;width:95px;text-align:right;height:16px;line-height:16px;color:#000;">270</div>
<div class="t" style="left:6px;top:113px;height:16px;line-height:16px;color:#000;">winrdlv3.exe</div>
<div class="t n" style="left:186px;top:113px;height:16px;line-height:16px;color:#000;">1300</div>
<div class="t" style="left:236px;top:113px;height:16px;line-height:16px;color:#000;">ipg.pixart.com.tw</div>
<div class="t n" style="left:721px;top:113px;width:95px;text-align:right;height:16px;line-height:16px;color:#000;">162</div>
<div class="t n" style="left:821px;top:113px;width:95px;text-align:right;height:16px;line-height:16px;color:#000;">23</div>
<div class="t n" style="left:921px;top:113px;width:95px;text-align:right;height:16px;line-height:16px;color:#000;">185</div>
<div class="t" style="left:6px;top:129px;height:16px;line-height:16px;color:#000;">System</div>
<div class="t n" style="left:186px;top:129px;height:16px;line-height:16px;color:#000;">4</div>
<div class="t n" style="left:236px;top:129px;height:16px;line-height:16px;color:#000;">172.20.30.255</div>
<div class="t n" style="left:721px;top:129px;width:95px;text-align:right;height:16px;line-height:16px;color:#000;">0</div>
<div class="t n" style="left:821px;top:129px;width:95px;text-align:right;height:16px;line-height:16px;color:#000;">115</div>
<div class="t n" style="left:921px;top:129px;width:95px;text-align:right;height:16px;line-height:16px;color:#000;">115</div>
<div class="t" style="left:6px;top:145px;height:16px;line-height:16px;color:#000;">WLKSvc.exe</div>
<div class="t n" style="left:186px;top:145px;height:16px;line-height:16px;color:#000;">1240</div>
<div class="t" style="left:236px;top:145px;height:16px;line-height:16px;color:#000;">sdct-svd13211cw.pixart.com.tw</div>
<div class="t n" style="left:721px;top:145px;width:95px;text-align:right;height:16px;line-height:16px;color:#000;">1</div>
<div class="t n" style="left:821px;top:145px;width:95px;text-align:right;height:16px;line-height:16px;color:#000;">41</div>
<div class="t n" style="left:921px;top:145px;width:95px;text-align:right;height:16px;line-height:16px;color:#000;">42</div>
<div class="t" style="left:6px;top:161px;height:16px;line-height:16px;color:#000;">winrdlv3.exe</div>
<div class="t n" style="left:186px;top:161px;height:16px;line-height:16px;color:#000;">1300</div>
<div class="t n" style="left:236px;top:161px;height:16px;line-height:16px;color:#000;">172.20.30.255</div>
<div class="t n" style="left:721px;top:161px;width:95px;text-align:right;height:16px;line-height:16px;color:#000;">0</div>
<div class="t n" style="left:821px;top:161px;width:95px;text-align:right;height:16px;line-height:16px;color:#000;">40</div>
<div class="t n" style="left:921px;top:161px;width:95px;text-align:right;height:16px;line-height:16px;color:#000;">40</div>
</div>
<div style="left:1023px;top:545px;width:16px;height:185px;background-color:#fff;background-image:linear-gradient(45deg,#d4d0c8 25%,transparent 25%,transparent 75%,#d4d0c8 75%),linear-gradient(45deg,#d4d0c8 25%,transparent 25%,transparent 75%,#d4d0c8 75%);background-size:2px 2px;background-position:0 0,1px 1px;"></div>
<div style="left:1023px;top:545px;width:16px;height:16px;background:#d4d0c8;box-shadow:inset -1px -1px 0 #404040,inset 1px 1px 0 #fff,inset -2px -2px 0 #808080;"></div>
<svg style="position:absolute;left:1027px;top:551px" width="7" height="4" shape-rendering="crispEdges" fill="#000"><rect x="3" y="0" width="1" height="1"/><rect x="2" y="1" width="3" height="1"/><rect x="1" y="2" width="5" height="1"/><rect x="0" y="3" width="7" height="1"/></svg>
<div style="left:1023px;top:714px;width:16px;height:16px;background:#d4d0c8;box-shadow:inset -1px -1px 0 #404040,inset 1px 1px 0 #fff,inset -2px -2px 0 #808080;"></div>
<svg style="position:absolute;left:1027px;top:720px" width="7" height="4" shape-rendering="crispEdges" fill="#000"><rect x="0" y="0" width="7" height="1"/><rect x="1" y="1" width="5" height="1"/><rect x="2" y="2" width="3" height="1"/><rect x="3" y="3" width="1" height="1"/></svg>
<div style="left:1023px;top:561px;width:16px;height:100px;background:#d4d0c8;box-shadow:inset -1px -1px 0 #404040,inset 1px 1px 0 #fff,inset -2px -2px 0 #808080;"></div>
<div style="left:1px;top:737px;width:1039px;height:216px;border:1px solid #646464;box-sizing:border-box;background:#d4d0c8;"></div>
<div style="left:2px;top:738px;width:1037px;height:1px;background:#f4f2ee;"></div>
<div class="t" style="left:8px;top:744px;height:16px;line-height:16px;font-weight:bold;font-size:12px;letter-spacing:0;">Memory</div>
<div style="left:293px;top:745px;width:12px;height:13px;border-top:1px solid #808080;border-left:1px solid #808080;border-bottom:1px solid #fff;border-right:1px solid #fff;overflow:hidden;">
<svg style="position:absolute;left:0;top:0" width="10" height="11" shape-rendering="crispEdges"><rect x="0" y="0" width="10" height="11" fill="#1f6f1f"/><rect x="0" y="0" width="1" height="1" fill="#001800"/><rect x="0" y="3" width="1" height="1" fill="#001800"/><rect x="0" y="5" width="1" height="1" fill="#001800"/><rect x="0" y="7" width="1" height="1" fill="#001800"/><rect x="0" y="9" width="1" height="1" fill="#001800"/><rect x="0" y="01" width="1" height="1" fill="#001800"/><rect x="3" y="0" width="1" height="1" fill="#001800"/><rect x="3" y="3" width="1" height="1" fill="#001800"/><rect x="3" y="5" width="1" height="1" fill="#001800"/><rect x="3" y="7" width="1" height="1" fill="#001800"/><rect x="3" y="9" width="1" height="1" fill="#001800"/><rect x="3" y="01" width="1" height="1" fill="#001800"/><rect x="5" y="0" width="1" height="1" fill="#001800"/><rect x="5" y="3" width="1" height="1" fill="#001800"/><rect x="5" y="5" width="1" height="1" fill="#001800"/><rect x="5" y="7" width="1" height="1" fill="#001800"/><rect x="5" y="9" width="1" height="1" fill="#001800"/><rect x="5" y="01" width="1" height="1" fill="#001800"/><rect x="7" y="0" width="1" height="1" fill="#001800"/><rect x="7" y="3" width="1" height="1" fill="#001800"/><rect x="7" y="5" width="1" height="1" fill="#001800"/><rect x="7" y="7" width="1" height="1" fill="#001800"/><rect x="7" y="9" width="1" height="1" fill="#001800"/><rect x="7" y="01" width="1" height="1" fill="#001800"/><rect x="9" y="0" width="1" height="1" fill="#001800"/><rect x="9" y="3" width="1" height="1" fill="#001800"/><rect x="9" y="5" width="1" height="1" fill="#001800"/><rect x="9" y="7" width="1" height="1" fill="#001800"/><rect x="9" y="9" width="1" height="1" fill="#001800"/><rect x="9" y="01" width="1" height="1" fill="#001800"/><rect x="0" y="11" width="10" height="0" fill="#00f000"/></svg>
</div>
<div class="t" style="left:310px;top:745px;height:16px;line-height:16px;font-size:10px;">0 Hard Faults/sec</div>
<div style="left:654px;top:745px;width:12px;height:13px;border-top:1px solid #808080;border-left:1px solid #808080;border-bottom:1px solid #fff;border-right:1px solid #fff;overflow:hidden;">
<div style="left:0;top:0;width:10px;height:2px;background:#000080;"></div>
<div style="left:0;top:2px;width:10px;height:9px;background:#78aaf8;"></div>
</div>
<div class="t" style="left:671px;top:745px;height:16px;line-height:16px;font-size:10px;">75% Used Physical Memory</div>
<svg style="position:absolute;left:1016px;top:747px" width="9" height="5" shape-rendering="crispEdges" fill="#000"><rect x="4" y="0" width="1" height="1"/><rect x="3" y="1" width="3" height="1"/><rect x="2" y="2" width="5" height="1"/><rect x="1" y="3" width="7" height="1"/><rect x="0" y="4" width="9" height="1"/></svg>
<div style="left:2px;top:766px;width:1037px;height:1px;background:#808080;"></div>
<div style="left:2px;top:767px;width:1037px;height:185px;background:#fff;overflow:hidden;"></div>
<div style="left:2px;top:767px;width:1021px;height:16px;background:#d4d0c8;"></div>
<div style="left:2px;top:767px;width:1021px;height:1px;background:#fff;"></div>
<div style="left:2px;top:781px;width:1021px;height:1px;background:#808080;"></div>
<div style="left:2px;top:782px;width:1021px;height:1px;background:#404040;"></div>
<div style="left:2px;top:767px;width:1px;height:15px;background:#fff;"></div>
<div style="left:181px;top:767px;width:1px;height:15px;background:#404040;"></div>
<div style="left:182px;top:767px;width:1px;height:15px;background:#fff;"></div>
<div class="t" style="left:8px;top:769px;height:14px;line-height:14px;">Image</div>
<div style="left:231px;top:767px;width:1px;height:15px;background:#404040;"></div>
<div style="left:232px;top:767px;width:1px;height:15px;background:#fff;"></div>
<div class="t" style="left:188px;top:769px;height:14px;line-height:14px;">PID</div>
<div style="left:622px;top:767px;width:1px;height:15px;background:#404040;"></div>
<div style="left:623px;top:767px;width:1px;height:15px;background:#fff;"></div>
<div class="t" style="left:232px;top:769px;width:385px;text-align:right;height:14px;line-height:14px;overflow:hidden;white-space:nowrap;">Hard Faults/sec</div>
<div style="left:722px;top:767px;width:1px;height:15px;background:#404040;"></div>
<div style="left:723px;top:767px;width:1px;height:15px;background:#fff;"></div>
<div class="t" style="left:623px;top:769px;width:94px;text-align:right;height:14px;line-height:14px;overflow:hidden;white-space:nowrap;">Commit (KB)</div>
<div style="left:822px;top:767px;width:1px;height:15px;background:#404040;"></div>
<div style="left:823px;top:767px;width:1px;height:15px;background:#fff;"></div>
<div class="t" style="left:723px;top:769px;width:94px;text-align:right;height:14px;line-height:14px;overflow:hidden;white-space:nowrap;">Working Set (KB)</div>
<div style="left:922px;top:767px;width:1px;height:15px;background:#404040;"></div>
<div style="left:923px;top:767px;width:1px;height:15px;background:#fff;"></div>
<div class="t" style="left:823px;top:769px;width:94px;text-align:right;height:14px;line-height:14px;overflow:hidden;white-space:nowrap;">Shareable (KB)</div>
<div style="left:1022px;top:767px;width:1px;height:15px;background:#404040;"></div>
<div style="left:1023px;top:767px;width:1px;height:15px;background:#fff;"></div>
<div class="t" style="left:923px;top:769px;width:66px;text-align:right;height:14px;line-height:14px;overflow:hidden;white-space:nowrap;">Private (KB)</div>
<svg style="position:absolute;left:999px;top:774px" width="5" height="3" shape-rendering="crispEdges" fill="#909090"><rect x="0" y="0" width="5" height="1"/><rect x="1" y="1" width="3" height="1"/><rect x="2" y="2" width="1" height="1"/></svg>
<div style="left:2px;top:783px;width:1021px;height:169px;overflow:hidden;">
<div class="t" style="left:6px;top:1px;height:16px;line-height:16px;color:#000;">sqlservr.exe</div>
<div class="t n" style="left:186px;top:1px;height:16px;line-height:16px;color:#000;">1204</div>
<div class="t n" style="left:230px;top:1px;width:386px;text-align:right;height:16px;line-height:16px;color:#000;">0</div>
<div class="t n" style="left:621px;top:1px;width:95px;text-align:right;height:16px;line-height:16px;color:#000;">1,276,952</div>
<div class="t n" style="left:721px;top:1px;width:95px;text-align:right;height:16px;line-height:16px;color:#000;">1,272,920</div>
<div class="t n" style="left:821px;top:1px;width:95px;text-align:right;height:16px;line-height:16px;color:#000;">25,508</div>
<div class="t n" style="left:921px;top:1px;width:95px;text-align:right;height:16px;line-height:16px;color:#000;">1,247,412</div>
<div class="t" style="left:6px;top:17px;height:16px;line-height:16px;color:#000;">svchost.exe (netsvcs)</div>
<div class="t n" style="left:186px;top:17px;height:16px;line-height:16px;color:#000;">792</div>
<div class="t n" style="left:230px;top:17px;width:386px;text-align:right;height:16px;line-height:16px;color:#000;">0</div>
<div class="t n" style="left:621px;top:17px;width:95px;text-align:right;height:16px;line-height:16px;color:#000;">93,836</div>
<div class="t n" style="left:721px;top:17px;width:95px;text-align:right;height:16px;line-height:16px;color:#000;">82,724</div>
<div class="t n" style="left:821px;top:17px;width:95px;text-align:right;height:16px;line-height:16px;color:#000;">24,352</div>
<div class="t n" style="left:921px;top:17px;width:95px;text-align:right;height:16px;line-height:16px;color:#000;">58,372</div>
<div class="t" style="left:6px;top:33px;height:16px;line-height:16px;color:#000;">chrome.exe</div>
<div class="t n" style="left:186px;top:33px;height:16px;line-height:16px;color:#000;">3620</div>
<div class="t n" style="left:230px;top:33px;width:386px;text-align:right;height:16px;line-height:16px;color:#000;">0</div>
<div class="t n" style="left:621px;top:33px;width:95px;text-align:right;height:16px;line-height:16px;color:#000;">50,244</div>
<div class="t n" style="left:721px;top:33px;width:95px;text-align:right;height:16px;line-height:16px;color:#000;">85,780</div>
<div class="t n" style="left:821px;top:33px;width:95px;text-align:right;height:16px;line-height:16px;color:#000;">42,316</div>
<div class="t n" style="left:921px;top:33px;width:95px;text-align:right;height:16px;line-height:16px;color:#000;">43,464</div>
<div class="t" style="left:6px;top:49px;height:16px;line-height:16px;color:#000;">DTMService.exe</div>
<div class="t n" style="left:186px;top:49px;height:16px;line-height:16px;color:#000;">2028</div>
<div class="t n" style="left:230px;top:49px;width:386px;text-align:right;height:16px;line-height:16px;color:#000;">0</div>
<div class="t n" style="left:621px;top:49px;width:95px;text-align:right;height:16px;line-height:16px;color:#000;">52,968</div>
<div class="t n" style="left:721px;top:49px;width:95px;text-align:right;height:16px;line-height:16px;color:#000;">69,260</div>
<div class="t n" style="left:821px;top:49px;width:95px;text-align:right;height:16px;line-height:16px;color:#000;">26,184</div>
<div class="t n" style="left:921px;top:49px;width:95px;text-align:right;height:16px;line-height:16px;color:#000;">43,076</div>
<div class="t" style="left:6px;top:65px;height:16px;line-height:16px;color:#000;">explorer.exe</div>
<div class="t n" style="left:186px;top:65px;height:16px;line-height:16px;color:#000;">2104</div>
<div class="t n" style="left:230px;top:65px;width:386px;text-align:right;height:16px;line-height:16px;color:#000;">0</div>
<div class="t n" style="left:621px;top:65px;width:95px;text-align:right;height:16px;line-height:16px;color:#000;">45,760</div>
<div class="t n" style="left:721px;top:65px;width:95px;text-align:right;height:16px;line-height:16px;color:#000;">78,128</div>
<div class="t n" style="left:821px;top:65px;width:95px;text-align:right;height:16px;line-height:16px;color:#000;">38,464</div>
<div class="t n" style="left:921px;top:65px;width:95px;text-align:right;height:16px;line-height:16px;color:#000;">39,664</div>
<div class="t" style="left:6px;top:81px;height:16px;line-height:16px;color:#000;">chrome.exe</div>
<div class="t n" style="left:186px;top:81px;height:16px;line-height:16px;color:#000;">4088</div>
<div class="t n" style="left:230px;top:81px;width:386px;text-align:right;height:16px;line-height:16px;color:#000;">0</div>
<div class="t n" style="left:621px;top:81px;width:95px;text-align:right;height:16px;line-height:16px;color:#000;">48,288</div>
<div class="t n" style="left:721px;top:81px;width:95px;text-align:right;height:16px;line-height:16px;color:#000;">109,152</div>
<div class="t n" style="left:821px;top:81px;width:95px;text-align:right;height:16px;line-height:16px;color:#000;">76,780</div>
<div class="t n" style="left:921px;top:81px;width:95px;text-align:right;height:16px;line-height:16px;color:#000;">32,372</div>
<div class="t" style="left:6px;top:97px;height:16px;line-height:16px;color:#000;">chrome.exe</div>
<div class="t n" style="left:186px;top:97px;height:16px;line-height:16px;color:#000;">2224</div>
<div class="t n" style="left:230px;top:97px;width:386px;text-align:right;height:16px;line-height:16px;color:#000;">0</div>
<div class="t n" style="left:621px;top:97px;width:95px;text-align:right;height:16px;line-height:16px;color:#000;">45,428</div>
<div class="t n" style="left:721px;top:97px;width:95px;text-align:right;height:16px;line-height:16px;color:#000;">59,368</div>
<div class="t n" style="left:821px;top:97px;width:95px;text-align:right;height:16px;line-height:16px;color:#000;">28,124</div>
<div class="t n" style="left:921px;top:97px;width:95px;text-align:right;height:16px;line-height:16px;color:#000;">31,244</div>
<div class="t" style="left:6px;top:113px;height:16px;line-height:16px;color:#000;">TrustedInstaller.exe</div>
<div class="t n" style="left:186px;top:113px;height:16px;line-height:16px;color:#000;">3772</div>
<div class="t n" style="left:230px;top:113px;width:386px;text-align:right;height:16px;line-height:16px;color:#000;">0</div>
<div class="t n" style="left:621px;top:113px;width:95px;text-align:right;height:16px;line-height:16px;color:#000;">118,176</div>
<div class="t n" style="left:721px;top:113px;width:95px;text-align:right;height:16px;line-height:16px;color:#000;">36,512</div>
<div class="t n" style="left:821px;top:113px;width:95px;text-align:right;height:16px;line-height:16px;color:#000;">6,276</div>
<div class="t n" style="left:921px;top:113px;width:95px;text-align:right;height:16px;line-height:16px;color:#000;">30,236</div>
<div class="t" style="left:6px;top:129px;height:16px;line-height:16px;color:#000;">wttstudio.exe</div>
<div class="t n" style="left:186px;top:129px;height:16px;line-height:16px;color:#000;">2856</div>
<div class="t n" style="left:230px;top:129px;width:386px;text-align:right;height:16px;line-height:16px;color:#000;">0</div>
<div class="t n" style="left:621px;top:129px;width:95px;text-align:right;height:16px;line-height:16px;color:#000;">35,952</div>
<div class="t n" style="left:721px;top:129px;width:95px;text-align:right;height:16px;line-height:16px;color:#000;">68,744</div>
<div class="t n" style="left:821px;top:129px;width:95px;text-align:right;height:16px;line-height:16px;color:#000;">44,584</div>
<div class="t n" style="left:921px;top:129px;width:95px;text-align:right;height:16px;line-height:16px;color:#000;">24,160</div>
</div>
<div style="left:1023px;top:767px;width:16px;height:185px;background-color:#fff;background-image:linear-gradient(45deg,#d4d0c8 25%,transparent 25%,transparent 75%,#d4d0c8 75%),linear-gradient(45deg,#d4d0c8 25%,transparent 25%,transparent 75%,#d4d0c8 75%);background-size:2px 2px;background-position:0 0,1px 1px;"></div>
<div style="left:1023px;top:767px;width:16px;height:16px;background:#d4d0c8;box-shadow:inset -1px -1px 0 #404040,inset 1px 1px 0 #fff,inset -2px -2px 0 #808080;"></div>
<svg style="position:absolute;left:1027px;top:773px" width="7" height="4" shape-rendering="crispEdges" fill="#000"><rect x="3" y="0" width="1" height="1"/><rect x="2" y="1" width="3" height="1"/><rect x="1" y="2" width="5" height="1"/><rect x="0" y="3" width="7" height="1"/></svg>
<div style="left:1023px;top:936px;width:16px;height:16px;background:#d4d0c8;box-shadow:inset -1px -1px 0 #404040,inset 1px 1px 0 #fff,inset -2px -2px 0 #808080;"></div>
<svg style="position:absolute;left:1027px;top:942px" width="7" height="4" shape-rendering="crispEdges" fill="#000"><rect x="0" y="0" width="7" height="1"/><rect x="1" y="1" width="5" height="1"/><rect x="2" y="2" width="3" height="1"/><rect x="3" y="3" width="1" height="1"/></svg>
<div style="left:1023px;top:783px;width:16px;height:27px;background:#d4d0c8;box-shadow:inset -1px -1px 0 #404040,inset 1px 1px 0 #fff,inset -2px -2px 0 #808080;"></div>
<div style="left:1042px;top:69px;width:14px;height:857px;background:#d4d0c8;box-shadow:inset -1px -1px 0 #404040,inset 1px 1px 0 #fff,inset -2px -2px 0 #808080;"></div>
<div style="left:1042px;top:69px;width:14px;height:15px;background:#d4d0c8;box-shadow:inset -1px -1px 0 #404040,inset 1px 1px 0 #fff,inset -2px -2px 0 #808080;"></div>
<svg style="position:absolute;left:1045px;top:75px" width="7" height="4" shape-rendering="crispEdges" fill="#000"><rect x="3" y="0" width="1" height="1"/><rect x="2" y="1" width="3" height="1"/><rect x="1" y="2" width="5" height="1"/><rect x="0" y="3" width="7" height="1"/></svg>
<div style="left:1056px;top:68px;width:1px;height:858px;background:#404040;"></div>
<div style="left:1057px;top:69px;width:208px;height:857px;background:#fff;"></div>
<div style="left:1057px;top:69px;width:208px;height:1px;background:#fff;"></div>
<div style="left:1265px;top:69px;width:15px;height:857px;background:#d4d0c8;box-shadow:inset -1px -1px 0 #404040,inset 1px 1px 0 #fff,inset -2px -2px 0 #808080;"></div>
<div style="left:1265px;top:69px;width:15px;height:15px;background:#d4d0c8;box-shadow:inset -1px -1px 0 #404040,inset 1px 1px 0 #fff,inset -2px -2px 0 #808080;"></div>
<svg style="position:absolute;left:1268px;top:75px" width="7" height="4" shape-rendering="crispEdges" fill="#000"><rect x="3" y="0" width="1" height="1"/><rect x="2" y="1" width="3" height="1"/><rect x="1" y="2" width="5" height="1"/><rect x="0" y="3" width="7" height="1"/></svg>
<div style="left:1279px;top:63px;width:1px;height:863px;background:#404040;"></div>
<div style="left:1063px;top:71px;width:200px;height:575px;border:1px solid #808080;box-sizing:border-box;background:#fff;"></div>
<div style="left:1064px;top:72px;width:198px;height:28px;background:#d4d0c8;"></div>
<div style="left:1064px;top:100px;width:198px;height:1px;background:#808080;"></div>
<svg style="position:absolute;left:1082px;top:80px" width="5" height="9" shape-rendering="crispEdges" fill="#000"><rect x="0" y="0" width="1" height="9"/><rect x="1" y="1" width="1" height="7"/><rect x="2" y="2" width="1" height="5"/><rect x="3" y="3" width="1" height="3"/><rect x="4" y="4" width="1" height="1"/></svg>
<div style="left:1162px;top:73px;width:88px;height:26px;background:#d4d0c8;box-shadow:inset -1px -1px 0 #404040,inset 1px 1px 0 #fff,inset -2px -2px 0 #808080;"></div>
<div style="left:1235px;top:75px;width:1px;height:22px;background:#808080;"></div>
<div style="left:1236px;top:75px;width:1px;height:22px;background:#fff;"></div>
<div class="t" style="left:1162px;top:78px;width:74px;text-align:center;height:16px;line-height:16px;font-size:10.5px;">Views</div>
<svg style="position:absolute;left:1239px;top:85px" width="7" height="4" shape-rendering="crispEdges" fill="#000"><rect x="0" y="0" width="7" height="1"/><rect x="1" y="1" width="5" height="1"/><rect x="2" y="2" width="3" height="1"/><rect x="3" y="3" width="1" height="1"/></svg>
<div class="t" style="left:1075px;top:106px;height:14px;line-height:14px;font-weight:bold;font-size:12px;letter-spacing:0;">CPU</div>
<div class="t" style="left:1120px;top:106px;width:124px;text-align:right;height:14px;line-height:14px;font-weight:bold;font-size:12px;letter-spacing:0.5px;">100%</div>
<div class="t" style="left:1120px;top:225px;width:124px;text-align:right;height:14px;line-height:14px;font-weight:bold;font-size:12px;letter-spacing:0.6px;">0%</div>
<div style="left:1247px;top:112px;width:6px;height:1px;background:#000;"></div>
<div style="left:1252px;top:112px;width:1px;height:120px;background:#000;"></div>
<div style="left:1247px;top:231px;width:6px;height:1px;background:#000;"></div>
<svg style="position:absolute;left:1074px;top:120px" width="170" height="102" viewBox="0 0 170 102"><rect x="0" y="0" width="170" height="102" fill="#000"/><path d="M2.5 2 V102 M17.5 2 V102 M32.5 2 V102 M47.5 2 V102 M62.5 2 V102 M77.5 2 V102 M92.5 2 V102 M107.5 2 V102 M122.5 2 V102 M137.5 2 V102 M152.5 2 V102 M167.5 2 V102 M1 12.5 H170 M1 22.5 H170 M1 32.5 H170 M1 42.5 H170 M1 52.5 H170 M1 62.5 H170 M1 72.5 H170 M1 82.5 H170 M1 92.5 H170" stroke="#1a6c1a" stroke-width="1"/><clipPath id="ccpu"><polygon points="1.0,102 1.0,61.0 2.0,60.9 5.4,27.2 9.4,49.5 11.2,73.5 14.6,44.9 18.0,66.7 20.9,91.8 26.6,43.2 29.5,62.1 35.8,42.1 39.2,49.5 43.8,93.0 47.2,95.8 54.1,54.1 57.5,67.8 60.9,96.4 71.2,54.6 78.1,72.4 80.4,89.6 82.0,85.0 86.6,41.5 92.9,8.3 96.9,23.2 99.2,66.7 101.5,89.5 104.3,86.1 107.7,90.7 116.3,52.9 119.8,87.3 122.0,94.0 127.8,96.4 134.6,44.9 138.1,85.0 143.8,96.4 148.4,94.1 152.9,56.4 157.5,87.3 162.1,96.4 167.2,96.4 169.5,79.2 171.0,75.0 171.0,102"/></clipPath><polygon points="1.0,102 1.0,61.0 2.0,60.9 5.4,27.2 9.4,49.5 11.2,73.5 14.6,44.9 18.0,66.7 20.9,91.8 26.6,43.2 29.5,62.1 35.8,42.1 39.2,49.5 43.8,93.0 47.2,95.8 54.1,54.1 57.5,67.8 60.9,96.4 71.2,54.6 78.1,72.4 80.4,89.6 82.0,85.0 86.6,41.5 92.9,8.3 96.9,23.2 99.2,66.7 101.5,89.5 104.3,86.1 107.7,90.7 116.3,52.9 119.8,87.3 122.0,94.0 127.8,96.4 134.6,44.9 138.1,85.0 143.8,96.4 148.4,94.1 152.9,56.4 157.5,87.3 162.1,96.4 167.2,96.4 169.5,79.2 171.0,75.0 171.0,102" fill="#007400"/><path d="M2.5 2 V102 M17.5 2 V102 M32.5 2 V102 M47.5 2 V102 M62.5 2 V102 M77.5 2 V102 M92.5 2 V102 M107.5 2 V102 M122.5 2 V102 M137.5 2 V102 M152.5 2 V102 M167.5 2 V102 M1 12.5 H170 M1 22.5 H170 M1 32.5 H170 M1 42.5 H170 M1 52.5 H170 M1 62.5 H170 M1 72.5 H170 M1 82.5 H170 M1 92.5 H170" stroke="#22dd22" stroke-width="1" clip-path="url(#ccpu)"/><polyline points="1.0,61.0 2.0,60.9 5.4,27.2 9.4,49.5 11.2,73.5 14.6,44.9 18.0,66.7 20.9,91.8 26.6,43.2 29.5,62.1 35.8,42.1 39.2,49.5 43.8,93.0 47.2,95.8 54.1,54.1 57.5,67.8 60.9,96.4 71.2,54.6 78.1,72.4 80.4,89.6 82.0,85.0 86.6,41.5 92.9,8.3 96.9,23.2 99.2,66.7 101.5,89.5 104.3,86.1 107.7,90.7 116.3,52.9 119.8,87.3 122.0,94.0 127.8,96.4 134.6,44.9 138.1,85.0 143.8,96.4 148.4,94.1 152.9,56.4 157.5,87.3 162.1,96.4 167.2,96.4 169.5,79.2 171.0,75.0" fill="none" stroke="#33f033" stroke-width="1.2"/><polyline points="1.0,20.0 2.4,17.3 3.5,10.8 5.0,6.0 8.2,6.0 9.3,10.8 10.4,18.1 11.2,24.6 12.5,16.8 14.0,10.0 15.6,12.1 17.7,16.4 19.4,22.5 21.2,28.9 23.5,26.8 24.6,19.9 25.7,12.1 26.4,6.0 28.1,7.8 32.0,12.5 34.1,8.6 35.4,5.2 38.0,7.8 39.7,13.0 41.5,20.7 43.7,22.0 47.2,30.2 50.6,27.6 52.4,18.1 54.1,13.4 56.3,13.8 58.0,19.4 59.3,25.9 61.4,28.9 63.6,26.8 66.2,21.6 68.8,18.6 71.4,10.8 74.4,19.0 77.4,13.0 79.1,20.3 80.9,25.9 83.5,22.9 84.8,13.0 86.2,4.3 94.8,4.3 96.5,8.6 98.3,15.1 100.8,20.7 103.9,16.0 106.5,22.5 107.8,27.6 110.8,27.6 113.4,18.1 116.0,8.6 117.7,16.4 119.0,25.9 121.1,30.7 123.7,29.8 125.5,26.8 128.6,30.2 131.6,26.8 132.5,20.7 133.3,15.1 134.2,8.6 135.1,9.9 136.4,18.1 137.2,25.9 140.3,30.7 143.3,30.2 145.9,25.9 148.0,27.6 149.3,32.8 150.6,25.9 151.5,19.0 152.8,12.1 155.4,12.1 157.1,17.3 158.8,23.8 160.6,29.4 161.4,32.4 164.4,31.1 167.0,32.8 168.8,28.1 170.0,24.6" fill="none" stroke="#4a70e8" stroke-width="2.2" stroke-linejoin="round"/><path d="M0 0.5 H170" stroke="#707070" stroke-width="1"/><path d="M0 1.5 H170" stroke="#282828" stroke-width="1"/><path d="M0.5 0 V102" stroke="#404040" stroke-width="1"/></svg>
<div class="t" style="left:1075px;top:225px;height:14px;line-height:14px;font-weight:bold;font-size:12px;">60 Seconds</div>
<div class="t" style="left:1075px;top:240px;height:14px;line-height:14px;font-weight:bold;font-size:12px;letter-spacing:0;">Disk</div>
<div class="t" style="left:1120px;top:240px;width:124px;text-align:right;height:14px;line-height:14px;font-weight:bold;font-size:12px;letter-spacing:0.5px;">10 MB/sec</div>
<div class="t n" style="left:1120px;top:359px;width:124px;text-align:right;height:14px;line-height:14px;font-weight:bold;font-size:12px;letter-spacing:0.6px;">0</div>
<div style="left:1247px;top:246px;width:6px;height:1px;background:#000;"></div>
<div style="left:1252px;top:246px;width:1px;height:120px;background:#000;"></div>
<div style="left:1247px;top:365px;width:6px;height:1px;background:#000;"></div>
<svg style="position:absolute;left:1074px;top:254px" width="170" height="102" viewBox="0 0 170 102"><rect x="0" y="0" width="170" height="102" fill="#000"/><path d="M2.5 2 V102 M17.5 2 V102 M32.5 2 V102 M47.5 2 V102 M62.5 2 V102 M77.5 2 V102 M92.5 2 V102 M107.5 2 V102 M122.5 2 V102 M137.5 2 V102 M152.5 2 V102 M167.5 2 V102 M1 12.5 H170 M1 22.5 H170 M1 32.5 H170 M1 42.5 H170 M1 52.5 H170 M1 62.5 H170 M1 72.5 H170 M1 82.5 H170 M1 92.5 H170" stroke="#1a6c1a" stroke-width="1"/><clipPath id="cdisk"><polygon points="1.0,102 1.0,102.0 2.1,101.2 3.5,62.6 5.6,27.6 9.0,53.0 11.1,75.0 13.1,94.3 17.3,78.5 20.0,97.0 22.8,101.2 26.6,50.3 31.0,75.0 32.4,92.9 37.9,53.0 41.3,80.5 45.5,101.2 52.3,101.2 56.5,78.5 60.6,101.2 63.3,101.2 66.8,32.4 68.6,2.1 70.2,32.4 74.3,94.3 77.1,77.8 80.5,101.2 87.4,99.8 92.9,94.3 95.4,42.0 97.7,91.5 103.9,101.2 112.2,101.2 116.3,76.4 119.7,101.2 130.7,101.2 134.6,77.8 139.0,101.2 146.6,101.2 154.8,77.8 159.6,101.2 171.0,101.2 171.0,102"/></clipPath><polygon points="1.0,102 1.0,102.0 2.1,101.2 3.5,62.6 5.6,27.6 9.0,53.0 11.1,75.0 13.1,94.3 17.3,78.5 20.0,97.0 22.8,101.2 26.6,50.3 31.0,75.0 32.4,92.9 37.9,53.0 41.3,80.5 45.5,101.2 52.3,101.2 56.5,78.5 60.6,101.2 63.3,101.2 66.8,32.4 68.6,2.1 70.2,32.4 74.3,94.3 77.1,77.8 80.5,101.2 87.4,99.8 92.9,94.3 95.4,42.0 97.7,91.5 103.9,101.2 112.2,101.2 116.3,76.4 119.7,101.2 130.7,101.2 134.6,77.8 139.0,101.2 146.6,101.2 154.8,77.8 159.6,101.2 171.0,101.2 171.0,102" fill="#007400"/><path d="M2.5 2 V102 M17.5 2 V102 M32.5 2 V102 M47.5 2 V102 M62.5 2 V102 M77.5 2 V102 M92.5 2 V102 M107.5 2 V102 M122.5 2 V102 M137.5 2 V102 M152.5 2 V102 M167.5 2 V102 M1 12.5 H170 M1 22.5 H170 M1 32.5 H170 M1 42.5 H170 M1 52.5 H170 M1 62.5 H170 M1 72.5 H170 M1 82.5 H170 M1 92.5 H170" stroke="#22dd22" stroke-width="1" clip-path="url(#cdisk)"/><polyline points="1.0,102.0 2.1,101.2 3.5,62.6 5.6,27.6 9.0,53.0 11.1,75.0 13.1,94.3 17.3,78.5 20.0,97.0 22.8,101.2 26.6,50.3 31.0,75.0 32.4,92.9 37.9,53.0 41.3,80.5 45.5,101.2 52.3,101.2 56.5,78.5 60.6,101.2 63.3,101.2 66.8,32.4 68.6,2.1 70.2,32.4 74.3,94.3 77.1,77.8 80.5,101.2 87.4,99.8 92.9,94.3 95.4,42.0 97.7,91.5 103.9,101.2 112.2,101.2 116.3,76.4 119.7,101.2 130.7,101.2 134.6,77.8 139.0,101.2 146.6,101.2 154.8,77.8 159.6,101.2 171.0,101.2" fill="none" stroke="#33f033" stroke-width="1.2"/><polyline points="1.0,102.5 2.1,101.2 8.3,83.3 11.8,98.4 17.3,99.8 20.0,102.5 24.1,102.5 29.0,90.2 35.1,95.7 39.3,102.5 48.9,102.5 52.3,98.4 56.5,102.5 62.6,102.5 64.0,59.9 65.4,37.9 68.8,33.1 70.9,53.0 75.0,99.8 80.5,102.5 89.0,100.0 94.3,95.7 99.8,102.5 113.0,102.5 114.0,98.4 117.5,102.5 130.0,102.5 132.1,99.1 135.0,102.5 148.0,102.5 152.0,95.7 157.5,102.5 171.0,102.5" fill="none" stroke="#4a70e8" stroke-width="2.2" stroke-linejoin="round"/><path d="M0 0.5 H170" stroke="#707070" stroke-width="1"/><path d="M0 1.5 H170" stroke="#282828" stroke-width="1"/><path d="M0.5 0 V102" stroke="#404040" stroke-width="1"/></svg>
<div class="t" style="left:1075px;top:374px;height:14px;line-height:14px;font-weight:bold;font-size:12px;letter-spacing:0;">Network</div>
<div class="t" style="left:1120px;top:374px;width:124px;text-align:right;height:14px;line-height:14px;font-weight:bold;font-size:12px;letter-spacing:0.5px;">1 Mbps</div>
<div class="t n" style="left:1120px;top:493px;width:124px;text-align:right;height:14px;line-height:14px;font-weight:bold;font-size:12px;letter-spacing:0.6px;">0</div>
<div style="left:1247px;top:380px;width:6px;height:1px;background:#000;"></div>
<div style="left:1252px;top:380px;width:1px;height:120px;background:#000;"></div>
<div style="left:1247px;top:499px;width:6px;height:1px;background:#000;"></div>
<svg style="position:absolute;left:1074px;top:388px" width="170" height="102" viewBox="0 0 170 102"><rect x="0" y="0" width="170" height="102" fill="#000"/><path d="M2.5 2 V102 M17.5 2 V102 M32.5 2 V102 M47.5 2 V102 M62.5 2 V102 M77.5 2 V102 M92.5 2 V102 M107.5 2 V102 M122.5 2 V102 M137.5 2 V102 M152.5 2 V102 M167.5 2 V102 M1 12.5 H170 M1 22.5 H170 M1 32.5 H170 M1 42.5 H170 M1 52.5 H170 M1 62.5 H170 M1 72.5 H170 M1 82.5 H170 M1 92.5 H170" stroke="#1a6c1a" stroke-width="1"/><clipPath id="cnet"><polygon points="1.0,102 1.0,26.0 2.2,25.7 5.1,1.9 6.9,13.8 8.7,75.6 11.1,67.3 12.8,3.1 15.2,1.9 17.0,41.1 18.8,1.9 22.9,1.9 26.5,36.4 28.9,25.7 32.4,20.9 36.0,73.2 41.3,91.0 45.5,79.1 49.1,76.8 53.2,41.1 56.8,74.4 60.9,64.9 65.7,32.8 69.3,49.4 75.2,91.0 78.8,76.8 81.1,78.0 83.5,87.4 85.6,82.8 89.1,50.7 92.1,45.9 95.1,64.9 101.0,98.2 104.0,98.2 106.4,67.3 107.6,36.4 110.5,56.6 116.5,13.8 119.4,74.4 122.4,32.8 127.2,49.5 131.9,70.9 140.2,34.0 143.8,37.6 149.8,82.8 155.1,57.8 158.7,74.4 165.2,64.9 167.6,50.7 171.0,60.2 171.0,102"/></clipPath><polygon points="1.0,102 1.0,26.0 2.2,25.7 5.1,1.9 6.9,13.8 8.7,75.6 11.1,67.3 12.8,3.1 15.2,1.9 17.0,41.1 18.8,1.9 22.9,1.9 26.5,36.4 28.9,25.7 32.4,20.9 36.0,73.2 41.3,91.0 45.5,79.1 49.1,76.8 53.2,41.1 56.8,74.4 60.9,64.9 65.7,32.8 69.3,49.4 75.2,91.0 78.8,76.8 81.1,78.0 83.5,87.4 85.6,82.8 89.1,50.7 92.1,45.9 95.1,64.9 101.0,98.2 104.0,98.2 106.4,67.3 107.6,36.4 110.5,56.6 116.5,13.8 119.4,74.4 122.4,32.8 127.2,49.5 131.9,70.9 140.2,34.0 143.8,37.6 149.8,82.8 155.1,57.8 158.7,74.4 165.2,64.9 167.6,50.7 171.0,60.2 171.0,102" fill="#007400"/><path d="M2.5 2 V102 M17.5 2 V102 M32.5 2 V102 M47.5 2 V102 M62.5 2 V102 M77.5 2 V102 M92.5 2 V102 M107.5 2 V102 M122.5 2 V102 M137.5 2 V102 M152.5 2 V102 M167.5 2 V102 M1 12.5 H170 M1 22.5 H170 M1 32.5 H170 M1 42.5 H170 M1 52.5 H170 M1 62.5 H170 M1 72.5 H170 M1 82.5 H170 M1 92.5 H170" stroke="#22dd22" stroke-width="1" clip-path="url(#cnet)"/><polyline points="1.0,26.0 2.2,25.7 5.1,1.9 6.9,13.8 8.7,75.6 11.1,67.3 12.8,3.1 15.2,1.9 17.0,41.1 18.8,1.9 22.9,1.9 26.5,36.4 28.9,25.7 32.4,20.9 36.0,73.2 41.3,91.0 45.5,79.1 49.1,76.8 53.2,41.1 56.8,74.4 60.9,64.9 65.7,32.8 69.3,49.4 75.2,91.0 78.8,76.8 81.1,78.0 83.5,87.4 85.6,82.8 89.1,50.7 92.1,45.9 95.1,64.9 101.0,98.2 104.0,98.2 106.4,67.3 107.6,36.4 110.5,56.6 116.5,13.8 119.4,74.4 122.4,32.8 127.2,49.5 131.9,70.9 140.2,34.0 143.8,37.6 149.8,82.8 155.1,57.8 158.7,74.4 165.2,64.9 167.6,50.7 171.0,60.2" fill="none" stroke="#33f033" stroke-width="1.2"/><path d="M0 0.5 H170" stroke="#707070" stroke-width="1"/><path d="M0 1.5 H170" stroke="#282828" stroke-width="1"/><path d="M0.5 0 V102" stroke="#404040" stroke-width="1"/></svg>
<div class="t" style="left:1075px;top:508px;height:14px;line-height:14px;font-weight:bold;font-size:12px;letter-spacing:0;">Memory</div>
<div class="t" style="left:1120px;top:508px;width:124px;text-align:right;height:14px;line-height:14px;font-weight:bold;font-size:12px;letter-spacing:0.15px;">100 Hard Faults/sec</div>
<div class="t n" style="left:1120px;top:627px;width:124px;text-align:right;height:14px;line-height:14px;font-weight:bold;font-size:12px;letter-spacing:0.6px;">0</div>
<div style="left:1247px;top:514px;width:6px;height:1px;background:#000;"></div>
<div style="left:1252px;top:514px;width:1px;height:120px;background:#000;"></div>
<div style="left:1247px;top:633px;width:6px;height:1px;background:#000;"></div>
<svg style="position:absolute;left:1074px;top:522px" width="170" height="102" viewBox="0 0 170 102"><rect x="0" y="0" width="170" height="102" fill="#000"/><path d="M2.5 2 V102 M17.5 2 V102 M32.5 2 V102 M47.5 2 V102 M62.5 2 V102 M77.5 2 V102 M92.5 2 V102 M107.5 2 V102 M122.5 2 V102 M137.5 2 V102 M152.5 2 V102 M167.5 2 V102 M1 12.5 H170 M1 22.5 H170 M1 32.5 H170 M1 42.5 H170 M1 52.5 H170 M1 62.5 H170 M1 72.5 H170 M1 82.5 H170 M1 92.5 H170" stroke="#1a6c1a" stroke-width="1"/><clipPath id="cmem"><polygon points="76.8,102 76.8,102.0 80.0,96.8 83.2,102.0 83.2,102"/></clipPath><polygon points="76.8,102 76.8,102.0 80.0,96.8 83.2,102.0 83.2,102" fill="#007400"/><path d="M2.5 2 V102 M17.5 2 V102 M32.5 2 V102 M47.5 2 V102 M62.5 2 V102 M77.5 2 V102 M92.5 2 V102 M107.5 2 V102 M122.5 2 V102 M137.5 2 V102 M152.5 2 V102 M167.5 2 V102 M1 12.5 H170 M1 22.5 H170 M1 32.5 H170 M1 42.5 H170 M1 52.5 H170 M1 62.5 H170 M1 72.5 H170 M1 82.5 H170 M1 92.5 H170" stroke="#22dd22" stroke-width="1" clip-path="url(#cmem)"/><polyline points="76.8,102.0 80.0,96.8 83.2,102.0" fill="none" stroke="#33f033" stroke-width="1.2"/><polyline points="1.0,27.3 164.6,27.3 165.5,28.3 171.0,28.3" fill="none" stroke="#4a70e8" stroke-width="2.2" stroke-linejoin="round"/><path d="M0 0.5 H170" stroke="#707070" stroke-width="1"/><path d="M0 1.5 H170" stroke="#282828" stroke-width="1"/><path d="M0.5 0 V102" stroke="#404040" stroke-width="1"/></svg>
</body></html>
